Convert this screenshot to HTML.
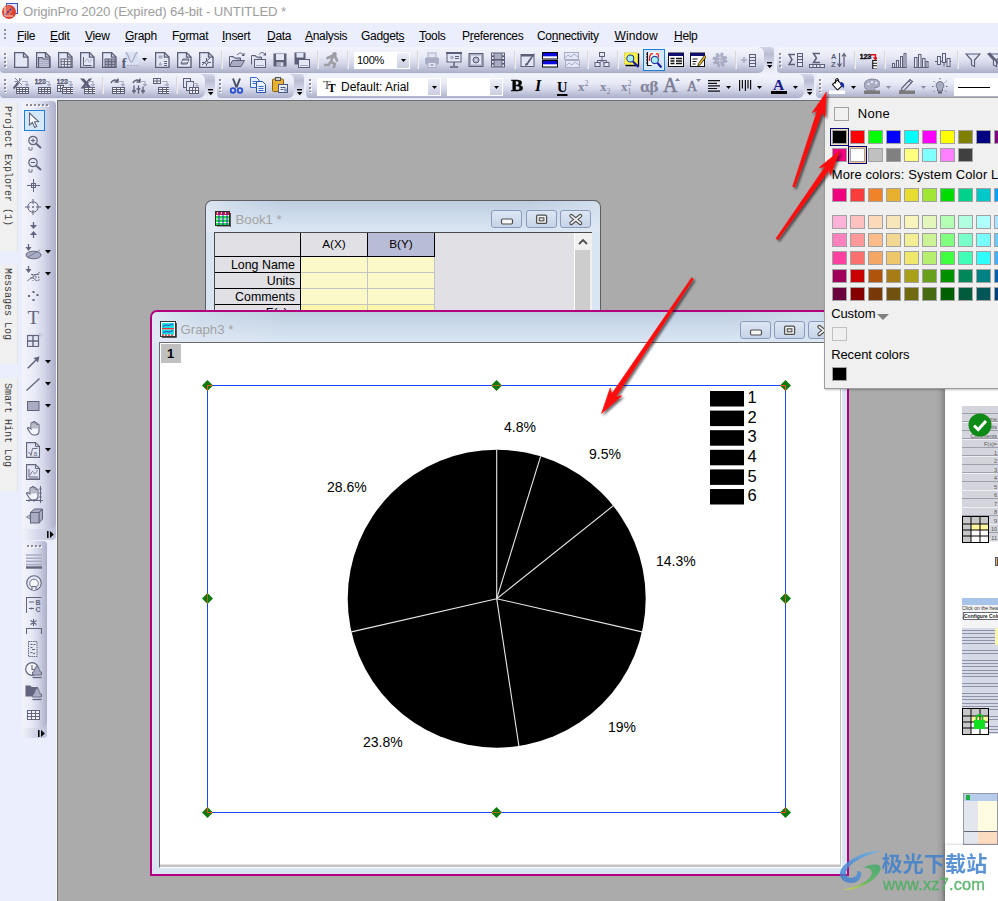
<!DOCTYPE html>
<html><head><meta charset="utf-8"><title>OriginPro 2020</title>
<style>
*{box-sizing:border-box;margin:0;padding:0}
html,body{width:998px;height:901px;overflow:hidden}
body{position:relative;background:#ebeefc;font-family:"Liberation Sans",sans-serif;font-size:12px;color:#000}
.abs{position:absolute}
#title{left:0;top:0;width:998px;height:23px;background:#fff}
#title .t{left:23px;top:3.5px;font-size:13.2px;color:#9d9d9d;white-space:nowrap;letter-spacing:-0.1px}
#menu{left:0;top:23px;width:998px;height:24px;background:#ebeefc}
#menu span{position:absolute;top:5.5px;font-size:12px;white-space:nowrap;color:#000;letter-spacing:-.3px}
#menu u{text-decoration:underline;text-underline-offset:1px}
.tb{background:linear-gradient(#f3f4fb 0%,#e9ebf7 35%,#d3d6e9 65%,#b4b8d0 92%,#a9adc6 100%);border-radius:4px}
.grip{width:2px;background:repeating-linear-gradient(#8d8fa3 0 2px,transparent 2px 4px)}
#mdi{left:57.2px;top:99.7px;width:941px;height:802px;background:#ababab;border-left:1.8px solid #6e6e6e;border-top:1.4px solid #6e6e6e}
.cw{border-radius:7px 7px 0 0;background:linear-gradient(90deg,rgba(226,234,245,.85) 0,rgba(226,234,245,.4) 7%,rgba(226,234,245,0) 20%,rgba(226,234,245,0) 82%,rgba(226,234,245,.55) 100%) 0 0/100% 31px no-repeat,linear-gradient(#bdcee1 0,#dbe6f3 30px,#dae5f2 31px)}
.cwt{position:absolute;font-size:13.2px;color:#a3a3a3;white-space:nowrap}
.wb{position:absolute;width:31px;height:18px;border:1px solid #8c9bbd;border-radius:3px;background:linear-gradient(#dde6f3,#c6d4e8)}
</style></head><body>

<!-- title bar -->
<div id="title" class="abs">
 <svg class="abs" style="left:1px;top:2px" width="18" height="18" viewBox="0 0 18 18">
  <rect x="5.5" y="1.5" width="11" height="10" fill="#dfe6fb" stroke="#3b56c8"/>
  <circle cx="8" cy="10" r="7" fill="#d8412c"/><circle cx="7" cy="8.5" r="4.5" fill="#ee7a62" opacity=".7"/>
  <path d="M4 13 L11 6" stroke="#2233bb" stroke-width="1.3" stroke-dasharray="2 1.2"/>
  <path d="M4 5v9h8" stroke="#fbe0d8" stroke-width="1" fill="none"/>
 </svg>
 <div class="abs t">OriginPro 2020 (Expired) 64-bit - UNTITLED *</div>
</div>

<!-- menu bar -->
<div id="menu" class="abs">
 <div class="abs grip" style="left:4px;top:6px;height:11px"></div>
 <span style="left:17px"><u>F</u>ile</span>
 <span style="left:50px"><u>E</u>dit</span>
 <span style="left:85px"><u>V</u>iew</span>
 <span style="left:125px"><u>G</u>raph</span>
 <span style="left:172px">F<u>o</u>rmat</span>
 <span style="left:222px"><u>I</u>nsert</span>
 <span style="left:267px"><u>D</u>ata</span>
 <span style="left:305px"><u>A</u>nalysis</span>
 <span style="left:361px">Gadget<u>s</u></span>
 <span style="left:419px"><u>T</u>ools</span>
 <span style="left:462px">P<u>r</u>eferences</span>
 <span style="left:537px">Co<u>n</u>nectivity</span>
 <span style="left:614.5px;letter-spacing:.1px"><u>W</u>indow</span>
 <span style="left:674px"><u>H</u>elp</span>
</div>

<!-- TOOLBARS -->
<div id="toolbars">
<div class="abs" style="left:760px;top:47px;width:14px;height:25.5px;background:linear-gradient(#d2d5e7 0,#b9bdd4 28%,#d3d6e8 62%,#f0f1f9 100%);border-radius:0 4px 4px 0;z-index:0"></div>
<div class="abs tb" style="left:0px;top:47px;width:764px;height:25.5px;border-radius:4px 6px 6px 4px"></div>
<svg class="abs" style="left:766.5px;top:61.5px" width="5.5" height="7" viewBox="0 0 5.5 7"><path d="M0 .7h5.500" stroke="#000" stroke-width="1.400"/><path d="M0 3h5.500l-2.750 3.300z" fill="#000"/></svg>
<div class="abs tb" style="left:777px;top:47px;width:225px;height:25.5px;border-radius:4px"></div>
<div class="abs" style="left:5px;top:54px;width:2px;height:14px;background:repeating-linear-gradient(#fdfdff 0 2px,transparent 2px 4px)"></div><div class="abs" style="left:4px;top:53px;width:2px;height:14px;background:repeating-linear-gradient(#8e8c92 0 2px,transparent 2px 4px)"></div>
<svg class="abs" style="left:13.5px;top:52px" width="16" height="16" viewBox="0 0 16 16"><path d="M.6 .6h8.900l4.500 4.500v10.300h-13.400z" fill="#e3e6f4" stroke="#5c5f77" stroke-width="1.350"/><path d="M9.500 .6v4.500h4.500" fill="none" stroke="#5c5f77" stroke-width="1.350"/></svg>
<svg class="abs" style="left:36px;top:52px" width="16" height="16" viewBox="0 0 16 16"><path d="M.6 .6h8.900l4.500 4.500v10.300h-13.400z" fill="#e3e6f4" stroke="#5c5f77" stroke-width="1.350"/><path d="M9.500 .6v4.500h4.500" fill="none" stroke="#5c5f77" stroke-width="1.350"/><path d="M2.500 5.500h4l1 1.500h6v8.500h-11z" fill="#a9adc4" stroke="#5c5f77" stroke-width="1.200"/><path d="M3.500 8.500h9M3.500 10.500h9M3.500 12.500h9M3.500 14.500h9" stroke="#e3e6f4" stroke-dasharray="1 1" opacity=".7"/></svg>
<svg class="abs" style="left:58px;top:52px" width="16" height="16" viewBox="0 0 16 16"><path d="M.6 .6h8.900l4.500 4.500v10.300h-13.400z" fill="#e3e6f4" stroke="#5c5f77" stroke-width="1.350"/><path d="M9.500 .6v4.500h4.500" fill="none" stroke="#5c5f77" stroke-width="1.350"/><rect x="2.5" y="6.5" width="11" height="9" fill="#5c5f77"/><rect x="3.50" y="7.50" width="2.33" height="1.67" fill="#f2f3fa"/><rect x="3.50" y="10.17" width="2.33" height="1.67" fill="#f2f3fa"/><rect x="3.50" y="12.83" width="2.33" height="1.67" fill="#f2f3fa"/><rect x="6.83" y="7.50" width="2.33" height="1.67" fill="#f2f3fa"/><rect x="6.83" y="10.17" width="2.33" height="1.67" fill="#f2f3fa"/><rect x="6.83" y="12.83" width="2.33" height="1.67" fill="#f2f3fa"/><rect x="10.17" y="7.50" width="2.33" height="1.67" fill="#f2f3fa"/><rect x="10.17" y="10.17" width="2.33" height="1.67" fill="#f2f3fa"/><rect x="10.17" y="12.83" width="2.33" height="1.67" fill="#f2f3fa"/></svg>
<svg class="abs" style="left:80px;top:52px" width="16" height="16" viewBox="0 0 16 16"><path d="M.6 .6h8.900l4.500 4.500v10.300h-13.400z" fill="#e3e6f4" stroke="#5c5f77" stroke-width="1.350"/><path d="M9.500 .6v4.500h4.500" fill="none" stroke="#5c5f77" stroke-width="1.350"/><path d="M3.5 5v8.5h8" fill="none" stroke="#5c5f77"/><path d="M5 10c1.5-4 2.5-4 3.5-1s2 1 3-2" fill="none" stroke="#a9adc4"/></svg>
<svg class="abs" style="left:102px;top:52px" width="16" height="16" viewBox="0 0 16 16"><path d="M.6 .6h8.900l4.500 4.500v10.300h-13.400z" fill="#e3e6f4" stroke="#5c5f77" stroke-width="1.350"/><path d="M9.500 .6v4.500h4.500" fill="none" stroke="#5c5f77" stroke-width="1.350"/><rect x="2.5" y="6.5" width="11" height="9" fill="#5c5f77"/><rect x="3.50" y="7.50" width="2.33" height="1.67" fill="#f2f3fa"/><rect x="3.50" y="10.17" width="2.33" height="1.67" fill="#f2f3fa"/><rect x="3.50" y="12.83" width="2.33" height="1.67" fill="#f2f3fa"/><rect x="6.83" y="7.50" width="2.33" height="1.67" fill="#f2f3fa"/><rect x="6.83" y="10.17" width="2.33" height="1.67" fill="#f2f3fa"/><rect x="6.83" y="12.83" width="2.33" height="1.67" fill="#f2f3fa"/><rect x="10.17" y="7.50" width="2.33" height="1.67" fill="#f2f3fa"/><rect x="10.17" y="10.17" width="2.33" height="1.67" fill="#f2f3fa"/><rect x="10.17" y="12.83" width="2.33" height="1.67" fill="#f2f3fa"/><rect x="3" y="7" width="10" height="8" fill="#5c5f77" opacity=".45"/></svg>
<svg class="abs" style="left:122px;top:52px" width="16" height="16" viewBox="0 0 16 16"><rect x="3" y="0" width="13" height="12.500" fill="#dce2f6"/><path d="M3.500 .5c3 0 3.500 9.500 6 9.500s3-9.500 6-9.500" fill="none" stroke="#a9adc4" stroke-width="1.300"/><path d="M5 13.500h11" stroke="#a9adc4" stroke-dasharray="2 1"/><text x="-.5" y="15.500" font-size="15" font-weight="bold" font-family="Liberation Serif,serif" fill="#5c5f77">f</text></svg>
<svg class="abs" style="left:154.5px;top:52px" width="16" height="16" viewBox="0 0 16 16"><path d="M.6 .6h8.900l4.500 4.500v10.300h-13.400z" fill="#e3e6f4" stroke="#5c5f77" stroke-width="1.350"/><path d="M9.500 .6v4.500h4.500" fill="none" stroke="#5c5f77" stroke-width="1.350"/><rect x="3.5" y="3.5" width="4" height="3" fill="#a9adc4"/><path d="M3 13.500l2.500-4 2 4z" fill="#a9adc4"/><path d="M9 9.500h3M9 11.500h3M9 13.500h3" stroke="#5c5f77"/></svg>
<svg class="abs" style="left:176.5px;top:52px" width="16" height="16" viewBox="0 0 16 16"><path d="M.6 .6h8.900l4.500 4.500v10.300h-13.400z" fill="#e3e6f4" stroke="#5c5f77" stroke-width="1.350"/><path d="M9.500 .6v4.500h4.500" fill="none" stroke="#5c5f77" stroke-width="1.350"/><path d="M4 12l2-5h6l-2 5z" fill="#a9adc4" stroke="#5c5f77"/><path d="M5 9.500h6" stroke="#e3e6f4"/></svg>
<svg class="abs" style="left:198.5px;top:52px" width="16" height="16" viewBox="0 0 16 16"><path d="M.6 .6h8.900l4.500 4.500v10.300h-13.400z" fill="#e3e6f4" stroke="#5c5f77" stroke-width="1.350"/><path d="M9.500 .6v4.500h4.500" fill="none" stroke="#5c5f77" stroke-width="1.350"/><path d="M3 13l8-7M7.500 6v8M3 10.500h9" stroke="#5c5f77" fill="none"/><circle cx="7.500" cy="10.500" r="1.500" fill="#e3e6f4" stroke="#5c5f77"/></svg>
<svg class="abs" style="left:142px;top:57.5px" width="5" height="3" viewBox="0 0 5 3"><path d="M0 0h5l-2.500 3z" fill="#000"/></svg>
<div class="abs" style="left:221px;top:51px;width:1px;height:18px;background:#dbd5d3"></div><div class="abs" style="left:222px;top:51px;width:1px;height:18px;background:#eceef8"></div>
<svg class="abs" style="left:229px;top:52px" width="16" height="16" viewBox="0 0 16 16"><path d="M.5 4.500h4l1 1.500h6v3" fill="#a9adc4" stroke="#5c5f77"/><path d="M.5 14.500v-10M.5 14.500l3-6h12l-3.500 6z" fill="#a9adc4" stroke="#5c5f77"/><path d="M8 3c2-2.500 5-2.500 6.500 0" fill="none" stroke="#5c5f77"/><path d="M15.500 .5v3.500h-3z" fill="#5c5f77"/></svg>
<svg class="abs" style="left:251px;top:52px" width="16" height="16" viewBox="0 0 16 16"><path d="M.5 3.500h4l1 1.500h5v3" fill="#a9adc4" stroke="#5c5f77"/><path d="M.5 12.500v-9" stroke="#5c5f77"/><path d="M8 2.500c2-2.500 4.500-2.500 6 0" fill="none" stroke="#5c5f77"/><path d="M15 .2v3.300h-3z" fill="#5c5f77"/><rect x="3.500" y="7.500" width="11" height="8" fill="#e3e6f4" stroke="#5c5f77"/><path d="M5.500 13.500h7" stroke="#5c5f77" stroke-dasharray="1 1"/></svg>
<svg class="abs" style="left:272px;top:52px" width="16" height="16" viewBox="0 0 16 16"><path d="M1.500 1.500h13v13h-13z" fill="#5c5f77"/><rect x="4" y="2" width="8" height="6" fill="#e3e6f4"/><rect x="4.500" y="10" width="7" height="4.500" fill="#a9adc4"/><rect x="9" y="11" width="1.800" height="3" fill="#e3e6f4"/></svg>
<svg class="abs" style="left:294px;top:52px" width="16" height="16" viewBox="0 0 16 16"><path d="M.5 .5h11v12h-11z" fill="#5c5f77"/><rect x="2.500" y="1" width="7" height="4.500" fill="#e3e6f4"/><rect x="4.500" y="7.500" width="11" height="8" fill="#e3e6f4" stroke="#5c5f77"/><path d="M6.500 13.500h7" stroke="#5c5f77" stroke-dasharray="1 1"/></svg>
<div class="abs" style="left:317px;top:51px;width:1px;height:18px;background:#dbd5d3"></div><div class="abs" style="left:318px;top:51px;width:1px;height:18px;background:#eceef8"></div>
<svg class="abs" style="left:324px;top:52px" width="16" height="16" viewBox="0 0 16 16"><circle cx="10.500" cy="2.300" r="2.300" fill="#9f9ea4"/><path d="M3.500 6l4.500-2 3.500 1.200 1.500 3.300M8.500 4.500l-1.500 5.500 4 2-1.500 4M7 9.500l-2.500 3.500h-4" fill="none" stroke="#9f9ea4" stroke-width="2.700" stroke-linejoin="round" stroke-linecap="round"/></svg>
<div class="abs" style="left:347px;top:51px;width:1px;height:18px;background:#dbd5d3"></div><div class="abs" style="left:348px;top:51px;width:1px;height:18px;background:#eceef8"></div>
<div class="abs" style="left:354px;top:52px;width:56px;height:17px;background:#fff"></div><div class="abs" style="left:357px;top:54px;font-size:11px;letter-spacing:-.3px">100%</div><div class="abs" style="left:397px;top:53px;width:12px;height:15px;background:linear-gradient(#eef0f8,#c9cde0)"></div>
<svg class="abs" style="left:401px;top:59.0px" width="5" height="3" viewBox="0 0 5 3"><path d="M0 0h5l-2.500 3z" fill="#000"/></svg>
<div class="abs" style="left:417px;top:51px;width:1px;height:18px;background:#dbd5d3"></div><div class="abs" style="left:418px;top:51px;width:1px;height:18px;background:#eceef8"></div>
<svg class="abs" style="left:424px;top:52px" width="16" height="16" viewBox="0 0 16 16"><rect x="4" y="1" width="8" height="5" fill="#e3e6f4" stroke="#a9adc4"/><rect x="1" y="5.500" width="14" height="7" rx="1.500" fill="#a9adc4"/><rect x="4" y="10.500" width="8" height="5" fill="#e3e6f4" stroke="#a9adc4"/><rect x="6.500" y="12" width="3" height="2" fill="#a9adc4"/></svg>
<svg class="abs" style="left:446px;top:52px" width="16" height="16" viewBox="0 0 16 16"><rect x="1" y="1" width="14" height="9" fill="#e3e6f4" stroke="#5c5f77"/><rect x="0" y="0" width="16" height="2" fill="#5c5f77"/><path d="M8 10v4M4 15h8" stroke="#5c5f77" stroke-width="1.400"/><circle cx="6" cy="5.500" r="1.800" fill="#a9adc4"/><path d="M9 4.500h4M9 6.500h4" stroke="#5c5f77"/></svg>
<svg class="abs" style="left:468px;top:52px" width="16" height="16" viewBox="0 0 16 16"><rect x="1" y="1.500" width="14" height="13" fill="#a9adc4" stroke="#5c5f77"/><rect x="3" y="3.500" width="10" height="9" fill="#e3e6f4"/><circle cx="8" cy="8" r="3" fill="#a9adc4" stroke="#5c5f77"/><circle cx="8" cy="8" r="1" fill="#e3e6f4"/></svg>
<svg class="abs" style="left:490px;top:52px" width="16" height="16" viewBox="0 0 16 16"><rect x="1" y=".5" width="14" height="15" fill="#5c5f77"/><rect x="4.500" y="1.500" width="7" height="5.500" fill="#a9adc4"/><rect x="4.500" y="8.500" width="7" height="6" fill="#a9adc4"/><rect x="2" y="1.5" width="1.600" height="1.800" fill="#f2f3fa"/><rect x="2" y="5.2" width="1.600" height="1.800" fill="#f2f3fa"/><rect x="2" y="9" width="1.600" height="1.800" fill="#f2f3fa"/><rect x="2" y="12.7" width="1.600" height="1.800" fill="#f2f3fa"/><rect x="12.4" y="1.5" width="1.600" height="1.800" fill="#f2f3fa"/><rect x="12.4" y="5.2" width="1.600" height="1.800" fill="#f2f3fa"/><rect x="12.4" y="9" width="1.600" height="1.800" fill="#f2f3fa"/><rect x="12.4" y="12.7" width="1.600" height="1.800" fill="#f2f3fa"/></svg>
<div class="abs" style="left:514px;top:51px;width:1px;height:18px;background:#dbd5d3"></div><div class="abs" style="left:515px;top:51px;width:1px;height:18px;background:#eceef8"></div>
<svg class="abs" style="left:520px;top:52px" width="16" height="16" viewBox="0 0 16 16"><rect x="1" y="2.500" width="13" height="12" fill="#e3e6f4" stroke="#5c5f77"/><rect x="1" y="2.500" width="13" height="2" fill="#5c5f77"/><path d="M15 .5c-3 3-6 7-8 10l1.500 1c2-3 5-7 6.500-11z" fill="#5c5f77"/><path d="M5 13.500c0-2 1.200-3 2.200-2.800l1.200.8c0 1.500-1.400 2.200-3.400 2z" fill="#5c5f77"/></svg>
<svg class="abs" style="left:542px;top:52px" width="16" height="16" viewBox="0 0 16 16"><rect x=".5" y=".5" width="15" height="6.500" fill="#fff" stroke="#000"/><rect x="1" y="1" width="14" height="3.300" fill="#0a0adc"/><rect x=".5" y="8.500" width="15" height="6.500" fill="#fff" stroke="#000"/><rect x="1" y="9" width="14" height="3.300" fill="#0a0adc"/></svg>
<svg class="abs" style="left:564px;top:52px" width="16" height="16" viewBox="0 0 16 16"><rect x=".5" y=".5" width="14" height="7" fill="#e3e6f4" stroke="#a9adc4"/><path d="M1 6l3-3 3 2 3-3 4 3" fill="none" stroke="#a9adc4"/><rect x="1.500" y="8.500" width="14" height="7" fill="#e3e6f4" stroke="#a9adc4"/><path d="M2 14l3-3 3 2 3-3 4 3" fill="none" stroke="#a9adc4"/></svg>
<div class="abs" style="left:587px;top:51px;width:1px;height:18px;background:#dbd5d3"></div><div class="abs" style="left:588px;top:51px;width:1px;height:18px;background:#eceef8"></div>
<svg class="abs" style="left:594px;top:52px" width="16" height="16" viewBox="0 0 16 16"><path d="M8 5v3M3.500 11v-2.500h9v2.500" fill="none" stroke="#5c5f77"/><rect x="5.500" y=".5" width="5" height="4" fill="#e3e6f4" stroke="#5c5f77"/><rect x="1" y="10.500" width="5" height="4" fill="#e3e6f4" stroke="#5c5f77"/><rect x="10" y="10.500" width="5" height="4" fill="#e3e6f4" stroke="#5c5f77"/><path d="M8 8.500l-3 3M8 8.500l3 3" stroke="#5c5f77" stroke-width=".8"/></svg>
<div class="abs" style="left:617px;top:51px;width:1px;height:18px;background:#dbd5d3"></div><div class="abs" style="left:618px;top:51px;width:1px;height:18px;background:#eceef8"></div>
<svg class="abs" style="left:624px;top:52px" width="16" height="16" viewBox="0 0 16 16"><path d="M14.500 1.500v12h-13" fill="none" stroke="#000" stroke-width="1.300"/><rect x=".5" y=".8" width="13" height="11.500" fill="#fbf34a" stroke="#c9b800" stroke-width=".8" stroke-dasharray="1 1"/><circle cx="6.300" cy="6.500" r="3.500" fill="#a8f0f8" stroke="#2a3a9a" stroke-width="1.100"/><path d="M9 9.500l5.500 5.500" stroke="#1a1a9a" stroke-width="2.200"/></svg>
<div class="abs" style="left:642.500px;top:49px;width:22px;height:22px;border:1px solid #1c80d8;background:#d4e8fa"></div>
<svg class="abs" style="left:646px;top:52px" width="16" height="16" viewBox="0 0 16 16"><rect x="2" y="0" width="11" height="13" fill="#fff"/><path d="M1.500 0v13.500h4" fill="none" stroke="#111" stroke-width="1.200"/><path d="M0 2h1.500M0 5h1.500M0 8h1.500M0 11h1.500" stroke="#111"/><path d="M3.500 9c0-7 1.500-8 3.500-7M10 2.500c1.500-2 2.500-1 2.500 3" fill="none" stroke="#f01010" stroke-width="1.200"/><circle cx="8.800" cy="8" r="3.600" fill="#a8f0f8" stroke="#2a3a9a" stroke-width="1.100"/><path d="M11.500 11l4 4.500" stroke="#1a1a9a" stroke-width="2.200"/></svg>
<svg class="abs" style="left:668px;top:52px" width="16" height="16" viewBox="0 0 16 16"><rect x=".5" y="1" width="15" height="13.500" fill="#fff" stroke="#111"/><rect x=".5" y="1" width="15" height="3" fill="#101070"/><path d="M2.500 6.500h4M8 6.500h6M2.500 9h4M8 9h6M2.500 11.500h4M8 11.500h6" stroke="#111" stroke-width="1.300"/></svg>
<svg class="abs" style="left:690px;top:52px" width="16" height="16" viewBox="0 0 16 16"><rect x=".5" y="1" width="14" height="13.500" fill="#fff" stroke="#111"/><rect x=".5" y="1" width="14" height="3" fill="#101070"/><path d="M2.500 7h5M2.500 9.500h4M2.500 12h3" stroke="#111" stroke-width="1.200"/><path d="M14.500 3.500l-6 8-.8 3 2.600-1.800 6-8z" fill="#f0c020" stroke="#111" stroke-width=".8"/></svg>
<svg class="abs" style="left:712px;top:52px" width="16" height="16" viewBox="0 0 16 16"><circle cx="8" cy="8" r="6.200" fill="none" stroke="#a9adc4" stroke-width="2.600" stroke-dasharray="2.600 2.270"/><circle cx="8" cy="8" r="5.300" fill="#a9adc4"/><path d="M8 2.500v11M5.500 5.500h5M5 8.500h6" stroke="#c9cce0" stroke-width="1.100"/><circle cx="8" cy="8" r="5.300" fill="none" stroke="#8f93ab" stroke-width=".6" stroke-dasharray="1 1"/></svg>
<div class="abs" style="left:735px;top:51px;width:1px;height:18px;background:#dbd5d3"></div><div class="abs" style="left:736px;top:51px;width:1px;height:18px;background:#eceef8"></div>
<svg class="abs" style="left:741px;top:52px" width="16" height="16" viewBox="0 0 16 16"><path d="M0 8h6M3 5v6" stroke="#a9adc4" stroke-width="1.600"/><rect x="8.500" y="2.500" width="6" height="12" fill="#e3e6f4" stroke="#5c5f77"/><path d="M9 5.500h5M9 8.500h5M9 11.500h5" stroke="#5c5f77"/></svg>
<div class="abs" style="left:780px;top:54px;width:2px;height:14px;background:repeating-linear-gradient(#fdfdff 0 2px,transparent 2px 4px)"></div><div class="abs" style="left:779px;top:53px;width:2px;height:14px;background:repeating-linear-gradient(#8e8c92 0 2px,transparent 2px 4px)"></div>
<svg class="abs" style="left:788px;top:52px" width="16" height="16" viewBox="0 0 16 16"><path d="M7 2.500h-6l3 5-3 5h6" fill="none" stroke="#5c5f77" stroke-width="1.500"/><rect x="9.500" y="1.500" width="5" height="13" fill="#e3e6f4" stroke="#5c5f77"/><path d="M10 4.500h4M10 7.500h4M10 10.500h4" stroke="#5c5f77"/></svg>
<svg class="abs" style="left:809px;top:52px" width="16" height="16" viewBox="0 0 16 16"><path d="M11 1.500h-6.500l3 4.500-3 4.500h6.500" fill="none" stroke="#5c5f77" stroke-width="1.500"/><rect x=".5" y="12.500" width="15" height="3" fill="#e3e6f4" stroke="#5c5f77"/><path d="M4 13v2M7.500 13v2M11 13v2" stroke="#5c5f77"/></svg>
<svg class="abs" style="left:831px;top:52px" width="16" height="16" viewBox="0 0 16 16"><text x="0" y="7" font-size="7.500" font-weight="bold" font-family="Liberation Sans,sans-serif" fill="#5c5f77">A</text><text x="0" y="15" font-size="7.500" font-weight="bold" font-family="Liberation Sans,sans-serif" fill="#5c5f77">Z</text><path d="M8.500 1v13M6.500 11.500l2 3 2-3" fill="none" stroke="#5c5f77" stroke-width="1.200"/><path d="M13 15v-13M11 4.500l2-3 2 3" fill="none" stroke="#5c5f77" stroke-width="1.200"/></svg>
<div class="abs" style="left:854px;top:51px;width:1px;height:18px;background:#dbd5d3"></div><div class="abs" style="left:855px;top:51px;width:1px;height:18px;background:#eceef8"></div>
<svg class="abs" style="left:860px;top:52px" width="17" height="17" viewBox="0 0 16 16"><text x="-.5" y="6.500" font-size="7" font-weight="bold" font-family="Liberation Sans,sans-serif" fill="#111" stroke="#111" stroke-width=".35" letter-spacing="-.2">123</text><path d="M10 2.500h4.500v3" fill="none" stroke="#e01010" stroke-width="1.400"/><path d="M12 5l2.500 3 2.500-3z" fill="#e01010"/><rect x="12" y="8" width="4.500" height="8" fill="#fff" stroke="#111"/><path d="M12 10.500h4.500M12 13h4.500" stroke="#111"/></svg>
<div class="abs" style="left:884px;top:51px;width:1px;height:18px;background:#dbd5d3"></div><div class="abs" style="left:885px;top:51px;width:1px;height:18px;background:#eceef8"></div>
<svg class="abs" style="left:891px;top:52px" width="16" height="16" viewBox="0 0 16 16"><path d="M.5 15.500h15" stroke="#5c5f77"/><rect x="1.500" y="11.500" width="2" height="4" fill="#e3e6f4" stroke="#5c5f77"/><rect x="5.500" y="8.500" width="2" height="7" fill="#e3e6f4" stroke="#5c5f77"/><rect x="9.500" y="4.500" width="2" height="11" fill="#e3e6f4" stroke="#5c5f77"/><rect x="13" y="1.500" width="2" height="14" fill="#e3e6f4" stroke="#5c5f77"/></svg>
<svg class="abs" style="left:913px;top:52px" width="16" height="16" viewBox="0 0 16 16"><path d="M.5 15.500h15" stroke="#5c5f77"/><rect x="1.500" y="5.500" width="2.500" height="10" fill="#e3e6f4" stroke="#5c5f77"/><rect x="5.500" y="2.500" width="2.500" height="13" fill="#e3e6f4" stroke="#5c5f77"/><rect x="9.500" y="6.500" width="2.500" height="9" fill="#e3e6f4" stroke="#5c5f77"/><rect x="13" y="9.500" width="2" height="6" fill="#e3e6f4" stroke="#5c5f77"/></svg>
<svg class="abs" style="left:935px;top:52px" width="16" height="16" viewBox="0 0 16 16"><path d="M0 9.500h16" stroke="#5c5f77"/><rect x="2.500" y="4.500" width="3" height="8" fill="#e3e6f4" stroke="#5c5f77"/><rect x="7.500" y="1.500" width="3" height="9" fill="#e3e6f4" stroke="#5c5f77"/><rect x="12" y="6.500" width="3" height="8" fill="#e3e6f4" stroke="#5c5f77"/><path d="M9 10.500v4" stroke="#5c5f77"/></svg>
<div class="abs" style="left:957px;top:51px;width:1px;height:18px;background:#dbd5d3"></div><div class="abs" style="left:958px;top:51px;width:1px;height:18px;background:#eceef8"></div>
<svg class="abs" style="left:965px;top:52px" width="16" height="16" viewBox="0 0 16 16"><path d="M1 2h14l-5.500 6v6.500l-3-1.500v-5z" fill="#e3e6f4" stroke="#5c5f77" stroke-width="1.200"/></svg>
<svg class="abs" style="left:987px;top:52px" width="16" height="16" viewBox="0 0 16 16"><path d="M1 2h14l-5.500 6v6.500l-3-1.500v-5z" fill="#e3e6f4" stroke="#5c5f77" stroke-width="1.200"/><path d="M2 1l13 14" stroke="#5c5f77" stroke-width="2"/></svg>
<div class="abs" style="left:201px;top:73.5px;width:14px;height:24.8px;background:linear-gradient(#d2d5e7 0,#b9bdd4 28%,#d3d6e8 62%,#f0f1f9 100%);border-radius:0 4px 4px 0;z-index:0"></div>
<div class="abs tb" style="left:0px;top:73.5px;width:205px;height:24.8px;border-radius:4px 6px 6px 4px"></div>
<svg class="abs" style="left:207.5px;top:88.5px" width="5.5" height="7" viewBox="0 0 5.5 7"><path d="M0 .7h5.500" stroke="#000" stroke-width="1.400"/><path d="M0 3h5.500l-2.750 3.300z" fill="#000"/></svg>
<div class="abs" style="left:290px;top:73.5px;width:14px;height:24.8px;background:linear-gradient(#d2d5e7 0,#b9bdd4 28%,#d3d6e8 62%,#f0f1f9 100%);border-radius:0 4px 4px 0;z-index:0"></div>
<div class="abs tb" style="left:217px;top:73.5px;width:77px;height:24.8px;border-radius:4px 6px 6px 4px"></div>
<svg class="abs" style="left:296.5px;top:88.5px" width="5.5" height="7" viewBox="0 0 5.5 7"><path d="M0 .7h5.500" stroke="#000" stroke-width="1.400"/><path d="M0 3h5.500l-2.750 3.300z" fill="#000"/></svg>
<div class="abs" style="left:800px;top:73.5px;width:14px;height:24.8px;background:linear-gradient(#d2d5e7 0,#b9bdd4 28%,#d3d6e8 62%,#f0f1f9 100%);border-radius:0 4px 4px 0;z-index:0"></div>
<div class="abs tb" style="left:306px;top:73.5px;width:498px;height:24.8px;border-radius:4px 6px 6px 4px"></div>
<svg class="abs" style="left:806.5px;top:88.5px" width="5.5" height="7" viewBox="0 0 5.5 7"><path d="M0 .7h5.500" stroke="#000" stroke-width="1.400"/><path d="M0 3h5.500l-2.750 3.300z" fill="#000"/></svg>
<div class="abs tb" style="left:816px;top:73.5px;width:190px;height:24.8px;border-radius:4px"></div>
<div class="abs" style="left:5px;top:80px;width:2px;height:13px;background:repeating-linear-gradient(#fdfdff 0 2px,transparent 2px 4px)"></div><div class="abs" style="left:4px;top:79px;width:2px;height:13px;background:repeating-linear-gradient(#8e8c92 0 2px,transparent 2px 4px)"></div>
<svg class="abs" style="left:13px;top:77.5px" width="16" height="16" viewBox="0 0 16 16"><path d="M2 0l7 7M6.500 0v3M9 .5l-6 5.500M1.500 3.500h3" stroke="#5c5f77" stroke-width=".8"/><path d="M.5 10.500l5-6" stroke="#5c5f77" stroke-width="2"/><path d="M9 3.500h5v3" fill="none" stroke="#a9adc4" stroke-width="1.200"/><path d="M11.500 6l2.500 3 2.500-3z" fill="#a9adc4"/><rect x="3" y="9" width="13" height="7" fill="#5c5f77"/><rect x="4.00" y="10.00" width="2.00" height="1.00" fill="#f2f3fa"/><rect x="4.00" y="12.00" width="2.00" height="1.00" fill="#f2f3fa"/><rect x="4.00" y="14.00" width="2.00" height="1.00" fill="#f2f3fa"/><rect x="7.00" y="10.00" width="2.00" height="1.00" fill="#f2f3fa"/><rect x="7.00" y="12.00" width="2.00" height="1.00" fill="#f2f3fa"/><rect x="7.00" y="14.00" width="2.00" height="1.00" fill="#f2f3fa"/><rect x="10.00" y="10.00" width="2.00" height="1.00" fill="#f2f3fa"/><rect x="10.00" y="12.00" width="2.00" height="1.00" fill="#f2f3fa"/><rect x="10.00" y="14.00" width="2.00" height="1.00" fill="#f2f3fa"/><rect x="13.00" y="10.00" width="2.00" height="1.00" fill="#f2f3fa"/><rect x="13.00" y="12.00" width="2.00" height="1.00" fill="#f2f3fa"/><rect x="13.00" y="14.00" width="2.00" height="1.00" fill="#f2f3fa"/></svg>
<svg class="abs" style="left:35px;top:77.5px" width="16" height="16" viewBox="0 0 16 16"><text x="-.5" y="6" font-size="7" font-weight="bold" font-family="Liberation Sans,sans-serif" fill="#5c5f77" stroke="#5c5f77" stroke-width=".35" letter-spacing="-.2">123</text><path d="M9 3.500h5v3" fill="none" stroke="#a9adc4" stroke-width="1.200"/><path d="M11.500 6l2.500 3 2.500-3z" fill="#a9adc4"/><rect x="3" y="9" width="13" height="7" fill="#5c5f77"/><rect x="4.00" y="10.00" width="2.00" height="1.00" fill="#f2f3fa"/><rect x="4.00" y="12.00" width="2.00" height="1.00" fill="#f2f3fa"/><rect x="4.00" y="14.00" width="2.00" height="1.00" fill="#f2f3fa"/><rect x="7.00" y="10.00" width="2.00" height="1.00" fill="#f2f3fa"/><rect x="7.00" y="12.00" width="2.00" height="1.00" fill="#f2f3fa"/><rect x="7.00" y="14.00" width="2.00" height="1.00" fill="#f2f3fa"/><rect x="10.00" y="10.00" width="2.00" height="1.00" fill="#f2f3fa"/><rect x="10.00" y="12.00" width="2.00" height="1.00" fill="#f2f3fa"/><rect x="10.00" y="14.00" width="2.00" height="1.00" fill="#f2f3fa"/><rect x="13.00" y="10.00" width="2.00" height="1.00" fill="#f2f3fa"/><rect x="13.00" y="12.00" width="2.00" height="1.00" fill="#f2f3fa"/><rect x="13.00" y="14.00" width="2.00" height="1.00" fill="#f2f3fa"/></svg>
<svg class="abs" style="left:57px;top:77.5px" width="16" height="16" viewBox="0 0 16 16"><text x="-.5" y="6" font-size="7" font-weight="bold" font-family="Liberation Sans,sans-serif" fill="#5c5f77" stroke="#5c5f77" stroke-width=".35" letter-spacing="-.2">123</text><path d="M9 3.500h5v3" fill="none" stroke="#a9adc4" stroke-width="1.200"/><path d="M11.500 6l2.500 3 2.500-3z" fill="#a9adc4"/><rect x="0" y="7" width="7" height="7" fill="#5c5f77"/><rect x="1.00" y="8.00" width="2.00" height="2.00" fill="#f2f3fa"/><rect x="1.00" y="11.00" width="2.00" height="2.00" fill="#f2f3fa"/><rect x="4.00" y="8.00" width="2.00" height="2.00" fill="#f2f3fa"/><rect x="4.00" y="11.00" width="2.00" height="2.00" fill="#f2f3fa"/><rect x="5" y="9" width="13" height="7" fill="#5c5f77"/><rect x="6.00" y="10.00" width="3.00" height="1.00" fill="#f2f3fa"/><rect x="6.00" y="12.00" width="3.00" height="1.00" fill="#f2f3fa"/><rect x="6.00" y="14.00" width="3.00" height="1.00" fill="#f2f3fa"/><rect x="10.00" y="10.00" width="3.00" height="1.00" fill="#f2f3fa"/><rect x="10.00" y="12.00" width="3.00" height="1.00" fill="#f2f3fa"/><rect x="10.00" y="14.00" width="3.00" height="1.00" fill="#f2f3fa"/><rect x="14.00" y="10.00" width="3.00" height="1.00" fill="#f2f3fa"/><rect x="14.00" y="12.00" width="3.00" height="1.00" fill="#f2f3fa"/><rect x="14.00" y="14.00" width="3.00" height="1.00" fill="#f2f3fa"/></svg>
<svg class="abs" style="left:79px;top:77.5px" width="16" height="16" viewBox="0 0 16 16"><path d="M1 .5h4l2.500 3 2.500-3h3l-4 5 4 5h-4l-2-2.500-2 2.500h-3.500l4-5z" fill="#5c5f77"/><path d="M9 3.500h5v3" fill="none" stroke="#a9adc4" stroke-width="1.200"/><path d="M11.500 6l2.500 3 2.500-3z" fill="#a9adc4"/><rect x="5" y="9" width="13" height="7" fill="#5c5f77"/><rect x="6.00" y="10.00" width="3.00" height="1.00" fill="#f2f3fa"/><rect x="6.00" y="12.00" width="3.00" height="1.00" fill="#f2f3fa"/><rect x="6.00" y="14.00" width="3.00" height="1.00" fill="#f2f3fa"/><rect x="10.00" y="10.00" width="3.00" height="1.00" fill="#f2f3fa"/><rect x="10.00" y="12.00" width="3.00" height="1.00" fill="#f2f3fa"/><rect x="10.00" y="14.00" width="3.00" height="1.00" fill="#f2f3fa"/><rect x="14.00" y="10.00" width="3.00" height="1.00" fill="#f2f3fa"/><rect x="14.00" y="12.00" width="3.00" height="1.00" fill="#f2f3fa"/><rect x="14.00" y="14.00" width="3.00" height="1.00" fill="#f2f3fa"/></svg>
<div class="abs" style="left:102px;top:77px;width:1px;height:17px;background:#dbd5d3"></div><div class="abs" style="left:103px;top:77px;width:1px;height:17px;background:#eceef8"></div>
<svg class="abs" style="left:109px;top:77.5px" width="16" height="16" viewBox="0 0 16 16"><path d="M2 5c1-3 5-4 7-1.500M9 .5v3.500h-3.500" fill="none" stroke="#5c5f77" stroke-width="1.500"/><path d="M9 3.500h5v3" fill="none" stroke="#a9adc4" stroke-width="1.200"/><path d="M11.500 6l2.500 3 2.500-3z" fill="#a9adc4"/><rect x="3" y="9" width="13" height="7" fill="#5c5f77"/><rect x="4.00" y="10.00" width="3.00" height="1.00" fill="#f2f3fa"/><rect x="4.00" y="12.00" width="3.00" height="1.00" fill="#f2f3fa"/><rect x="4.00" y="14.00" width="3.00" height="1.00" fill="#f2f3fa"/><rect x="8.00" y="10.00" width="3.00" height="1.00" fill="#f2f3fa"/><rect x="8.00" y="12.00" width="3.00" height="1.00" fill="#f2f3fa"/><rect x="8.00" y="14.00" width="3.00" height="1.00" fill="#f2f3fa"/><rect x="12.00" y="10.00" width="3.00" height="1.00" fill="#f2f3fa"/><rect x="12.00" y="12.00" width="3.00" height="1.00" fill="#f2f3fa"/><rect x="12.00" y="14.00" width="3.00" height="1.00" fill="#f2f3fa"/></svg>
<svg class="abs" style="left:131px;top:77.5px" width="16" height="16" viewBox="0 0 16 16"><path d="M2 5c1-3 5-4 7-1.500M9 .5v3.500h-3.500" fill="none" stroke="#5c5f77" stroke-width="1.500"/><path d="M9 3.500h5v3" fill="none" stroke="#a9adc4" stroke-width="1.200"/><path d="M11.500 6l2.500 3 2.500-3z" fill="#a9adc4"/><path d="M3 7.500v8M7.500 7.500v8M12 8.500v7M1 13h4M5.500 11h4M10 13h4" stroke="#5c5f77" stroke-width="1.300"/></svg>
<svg class="abs" style="left:153px;top:77.5px" width="16" height="16" viewBox="0 0 16 16"><rect x="0" y="0" width="8" height="6" fill="#5c5f77"/><rect x="1.00" y="1.00" width="2.50" height="1.50" fill="#f2f3fa"/><rect x="1.00" y="3.50" width="2.50" height="1.50" fill="#f2f3fa"/><rect x="4.50" y="1.00" width="2.50" height="1.50" fill="#f2f3fa"/><rect x="4.50" y="3.50" width="2.50" height="1.50" fill="#f2f3fa"/><path d="M9 3.500h5v3" fill="none" stroke="#a9adc4" stroke-width="1.200"/><path d="M11.500 6l2.500 3 2.500-3z" fill="#a9adc4"/><rect x="5" y="9" width="13" height="7" fill="#5c5f77"/><rect x="6.00" y="10.00" width="3.00" height="1.00" fill="#f2f3fa"/><rect x="6.00" y="12.00" width="3.00" height="1.00" fill="#f2f3fa"/><rect x="6.00" y="14.00" width="3.00" height="1.00" fill="#f2f3fa"/><rect x="10.00" y="10.00" width="3.00" height="1.00" fill="#f2f3fa"/><rect x="10.00" y="12.00" width="3.00" height="1.00" fill="#f2f3fa"/><rect x="10.00" y="14.00" width="3.00" height="1.00" fill="#f2f3fa"/><rect x="14.00" y="10.00" width="3.00" height="1.00" fill="#f2f3fa"/><rect x="14.00" y="12.00" width="3.00" height="1.00" fill="#f2f3fa"/><rect x="14.00" y="14.00" width="3.00" height="1.00" fill="#f2f3fa"/></svg>
<div class="abs" style="left:176px;top:77px;width:1px;height:17px;background:#dbd5d3"></div><div class="abs" style="left:177px;top:77px;width:1px;height:17px;background:#eceef8"></div>
<svg class="abs" style="left:183px;top:77.5px" width="16" height="16" viewBox="0 0 16 16"><rect x=".5" y=".5" width="7" height="9" fill="#e3e6f4" stroke="#5c5f77"/><rect x="3.500" y="3.500" width="7" height="9" fill="#e3e6f4" stroke="#5c5f77"/><path d="M10 5.500h4v2" fill="none" stroke="#a9adc4" stroke-width="1.200"/><path d="M12 7l2 2.500 2-2.500z" fill="#a9adc4"/><rect x="6" y="9" width="10" height="7" fill="#5c5f77"/><rect x="7.00" y="10.00" width="2.00" height="2.00" fill="#f2f3fa"/><rect x="7.00" y="13.00" width="2.00" height="2.00" fill="#f2f3fa"/><rect x="10.00" y="10.00" width="2.00" height="2.00" fill="#f2f3fa"/><rect x="10.00" y="13.00" width="2.00" height="2.00" fill="#f2f3fa"/><rect x="13.00" y="10.00" width="2.00" height="2.00" fill="#f2f3fa"/><rect x="13.00" y="13.00" width="2.00" height="2.00" fill="#f2f3fa"/></svg>
<div class="abs" style="left:220px;top:80px;width:2px;height:13px;background:repeating-linear-gradient(#fdfdff 0 2px,transparent 2px 4px)"></div><div class="abs" style="left:219px;top:79px;width:2px;height:13px;background:repeating-linear-gradient(#8e8c92 0 2px,transparent 2px 4px)"></div>
<svg class="abs" style="left:228px;top:77.5px" width="16" height="16" viewBox="0 0 16 16"><path d="M5 .5l3.500 9M12 .5l-3.500 9" stroke="#4a4e66" stroke-width="2"/><circle cx="5" cy="12.500" r="2.300" fill="none" stroke="#2a50d0" stroke-width="1.800"/><circle cx="12" cy="12.500" r="2.300" fill="none" stroke="#2a50d0" stroke-width="1.800"/></svg>
<svg class="abs" style="left:250px;top:76.5px" width="16" height="16" viewBox="0 0 16 16"><path d="M.5 .5h6l2.500 2.500v7.500h-8.500z" fill="#eaf2ff" stroke="#3a6ad0"/><path d="M2.500 4.500h4M2.500 6.500h4" stroke="#3a6ad0"/><path d="M6.500 4.500h6l3 3v8h-9z" fill="#eaf2ff" stroke="#2a50b0"/><path d="M8.500 9.500h5M8.500 11.500h5M8.500 13.500h5" stroke="#3a6ad0"/></svg>
<svg class="abs" style="left:272px;top:76.5px" width="16" height="16" viewBox="0 0 16 16"><rect x=".5" y="2" width="11" height="12.500" rx="1" fill="#e8b030" stroke="#8a6410"/><rect x="3.500" y=".5" width="5" height="3" fill="#d0d0d0" stroke="#555"/><rect x="6.500" y="7.500" width="9" height="8" fill="#e8eef8" stroke="#4a5a80"/><path d="M8.500 10.500h5M8.500 12.500h3" stroke="#4a5a80"/><rect x="12" y="11.500" width="3" height="3" fill="#8a9ac0"/></svg>
<div class="abs" style="left:310px;top:80px;width:2px;height:13px;background:repeating-linear-gradient(#fdfdff 0 2px,transparent 2px 4px)"></div><div class="abs" style="left:309px;top:79px;width:2px;height:13px;background:repeating-linear-gradient(#8e8c92 0 2px,transparent 2px 4px)"></div>
<div class="abs" style="left:317px;top:77.500px;width:124px;height:18px;background:#fff"></div>
<div class="abs" style="left:323px;top:78px;font-family:'Liberation Serif',serif;font-size:13px;line-height:14px;color:#555">T</div><div class="abs" style="left:328px;top:82px;font-family:'Liberation Serif',serif;font-weight:bold;font-size:11.500px;line-height:12px;color:#000">T</div>
<div class="abs" style="left:341px;top:79.500px;font-size:12px;white-space:nowrap;letter-spacing:0">Default: Arial</div>
<div class="abs" style="left:428px;top:78.500px;width:12px;height:16px;background:linear-gradient(#eef0f8,#c9cde0)"></div>
<svg class="abs" style="left:432px;top:85.5px" width="5" height="3" viewBox="0 0 5 3"><path d="M0 0h5l-2.500 3z" fill="#000"/></svg>
<div class="abs" style="left:447px;top:77.500px;width:56px;height:18px;background:#fff"></div>
<div class="abs" style="left:490px;top:78.500px;width:12px;height:16px;background:linear-gradient(#eef0f8,#c9cde0)"></div>
<svg class="abs" style="left:493.5px;top:85.5px" width="5" height="3" viewBox="0 0 5 3"><path d="M0 0h5l-2.500 3z" fill="#000"/></svg>
<div class="abs" style="left:511px;top:76px;font-family:'Liberation Serif',serif;font-weight:bold;font-size:16.500px;line-height:20px;-webkit-text-stroke:.5px #000;transform:scaleX(1.1);transform-origin:0 0">B</div>
<div class="abs" style="left:535px;top:76px;font-family:'Liberation Serif',serif;font-weight:bold;font-style:italic;font-size:16px;line-height:20px">I</div>
<div class="abs" style="left:557px;top:76.500px;font-family:'Liberation Serif',serif;font-size:14.500px;font-weight:bold;line-height:20px;text-decoration:underline;text-decoration-thickness:1.500px;text-underline-offset:2px">U</div>
<div class="abs" style="left:578px;top:77px;font-size:13px;font-family:'Liberation Serif',serif;font-weight:bold;font-style:normal;color:#83869d;line-height:20px">x<span style="font-size:8px;position:relative;top:-5px;font-weight:normal">2</span></div>
<div class="abs" style="left:600px;top:77px;font-size:13px;font-family:'Liberation Serif',serif;font-weight:bold;font-style:normal;color:#83869d;line-height:20px">x<span style="font-size:8px;position:relative;top:3px;font-weight:normal">2</span></div>
<div class="abs" style="left:621px;top:77px;font-size:13px;font-family:'Liberation Serif',serif;font-weight:bold;font-style:normal;color:#83869d;line-height:20px">x<span style="font-size:8px;position:relative;top:-5px;font-weight:normal">2</span><span style="font-size:8px;position:relative;top:3px;left:-4px;font-weight:normal">1</span></div>
<div class="abs" style="left:640px;top:76.500px;font-size:14px;font-family:'DejaVu Serif','Liberation Serif',serif;font-weight:bold;color:#83869d;line-height:20px;letter-spacing:-1.200px">αβ</div>
<div class="abs" style="left:663px;top:73px;font-size:20px;font-family:'Liberation Serif',serif;color:#787b92;-webkit-text-stroke:.5px #787b92;line-height:24px">A</div>
<svg class="abs" style="left:675px;top:78px" width="5" height="3" viewBox="0 0 5 3"><path d="M0 3h5l-2.500-3z" fill="#7f8298"/></svg>
<div class="abs" style="left:687px;top:77px;font-size:14px;font-family:'Liberation Serif',serif;color:#787b92;-webkit-text-stroke:.4px #787b92;line-height:20px">A</div>
<svg class="abs" style="left:696px;top:79px" width="5" height="3" viewBox="0 0 5 3"><path d="M0 0h5l-2.500 3z" fill="#7f8298"/></svg>
<svg class="abs" style="left:708px;top:79.5px" width="12" height="12" viewBox="0 0 12 12"><path d="M0 .7h12M0 3.300h9M0 5.900h12M0 8.500h9M0 11.100h12" stroke="#111" stroke-width="1.200"/></svg>
<svg class="abs" style="left:726px;top:85.5px" width="5" height="3" viewBox="0 0 5 3"><path d="M0 0h5l-2.500 3z" fill="#000"/></svg>
<svg class="abs" style="left:738.5px;top:80px" width="13" height="11" viewBox="0 0 13 11"><path d="M.6 0v11M3.400 0v8.500M6.400 0v11M9 0v8.500M11.600 0v9.500" stroke="#111" stroke-width="1.200"/></svg>
<svg class="abs" style="left:757px;top:85.5px" width="5" height="3" viewBox="0 0 5 3"><path d="M0 0h5l-2.500 3z" fill="#000"/></svg>
<div class="abs" style="left:773px;top:74.500px;font-size:15.500px;font-weight:bold;font-family:'Liberation Serif',serif;color:#1a1a8c;line-height:20px">A</div><div class="abs" style="left:771px;top:90.500px;width:16px;height:3.500px;background:#000"></div>
<svg class="abs" style="left:793px;top:85.5px" width="5" height="3" viewBox="0 0 5 3"><path d="M0 0h5l-2.500 3z" fill="#000"/></svg>
<div class="abs" style="left:820px;top:80px;width:2px;height:13px;background:repeating-linear-gradient(#fdfdff 0 2px,transparent 2px 4px)"></div><div class="abs" style="left:819px;top:79px;width:2px;height:13px;background:repeating-linear-gradient(#8e8c92 0 2px,transparent 2px 4px)"></div>
<svg class="abs" style="left:829px;top:77.5px" width="16" height="16" viewBox="0 0 16 16"><path d="M3.500 6.500l5-4.500 5 5.500-5 4.500z" fill="#fff" stroke="#111" stroke-width="1.100"/><path d="M6.500 5.500v-3.500a1.500 1.500 0 0 1 3 0v2" fill="none" stroke="#111"/><path d="M12 4c3 .5 4 3 2.500 6.500-1-2-2-3-3.500-3.500z" fill="#1a2ab0"/><rect x="0" y="12.500" width="16" height="3.500" fill="#fff"/></svg>
<svg class="abs" style="left:851px;top:85.5px" width="5" height="3" viewBox="0 0 5 3"><path d="M0 0h5l-2.500 3z" fill="#000"/></svg>
<svg class="abs" style="left:864px;top:77.5px" width="16" height="16" viewBox="0 0 16 16"><path d="M8.500 1c4.500 0 7.500 2 7.500 5s-2.500 3.500-4.500 3.500c-1.500 0-1.500 1.500-.5 2s-1 1.500-3 1.500c-4.500 0-8-2.500-8-6s3.500-6 8.500-6z" fill="#a9adc4" stroke="#5c5f77" stroke-width=".8" stroke-dasharray="1.600 .7"/><circle cx="4.500" cy="6" r="1.200" fill="#e3e6f4"/><circle cx="8" cy="4" r="1.200" fill="#e3e6f4"/><circle cx="12" cy="5" r="1.200" fill="#e3e6f4"/><rect x="0" y="12.500" width="16" height="3.500" fill="#7b7b7b"/></svg>
<svg class="abs" style="left:886px;top:85.5px" width="5" height="3" viewBox="0 0 5 3"><path d="M0 0h5l-2.500 3z" fill="#8a8da3"/></svg>
<svg class="abs" style="left:899px;top:77.5px" width="16" height="16" viewBox="0 0 16 16"><path d="M3 10l8-8.500 2.500 2-8 8.500-3.500 1z" fill="#e3e6f4" stroke="#5c5f77" stroke-width="1.100"/><path d="M10 3l2 2" stroke="#5c5f77"/><rect x="0" y="12.500" width="16" height="3.500" fill="#7b7b7b"/></svg>
<svg class="abs" style="left:921px;top:85.5px" width="5" height="3" viewBox="0 0 5 3"><path d="M0 0h5l-2.500 3z" fill="#8a8da3"/></svg>
<svg class="abs" style="left:932px;top:77.5px" width="16" height="16" viewBox="0 0 16 16"><path d="M8 3.500a4 4 0 0 1 2.500 7v2.500h-5v-2.500a4 4 0 0 1 2.500-7z" fill="#a9adc4" stroke="#5c5f77" stroke-width=".8"/><rect x="6" y="13.500" width="4" height="2" fill="#5c5f77"/><path d="M8 0v2M1.500 3l1.500 1.500M14.500 3l-1.500 1.500M0 8.500h2M14 8.500h2M1.500 14l1.500-1.500M14.500 14l-1.500-1.500" stroke="#5c5f77" stroke-dasharray="1 .6"/></svg>
<div class="abs" style="left:953.500px;top:77.500px;width:50px;height:18px;background:#fff"></div><div class="abs" style="left:958px;top:86.500px;width:32px;height:1px;background:#000"></div>
<div class="abs" style="left:0;top:98.300px;width:998px;height:1.200px;background:#e4e6f3"></div>
</div>

<!-- SIDEBAR -->
<div id="sidebar">
<div class="abs" style="left:0;top:103px;width:18px;height:148px;background:#f0f0f0;border-right:1px solid #e2e2e8"></div>
<div class="abs" style="left:13px;top:106px;transform-origin:0 0;transform:rotate(90deg);font-family:'Liberation Mono',monospace;font-size:10px;white-space:nowrap;color:#3c3c3c;line-height:12px">Project Explorer (1)</div>
<div class="abs" style="left:0;top:265px;width:18px;height:99px;background:#f0f0f0;border-right:1px solid #e2e2e8"></div>
<div class="abs" style="left:13px;top:268px;transform-origin:0 0;transform:rotate(90deg);font-family:'Liberation Mono',monospace;font-size:10px;white-space:nowrap;color:#3c3c3c;line-height:12px">Messages Log</div>
<div class="abs" style="left:0;top:378px;width:18px;height:113px;background:#f0f0f0;border-right:1px solid #e2e2e8"></div>
<div class="abs" style="left:13px;top:383px;transform-origin:0 0;transform:rotate(90deg);font-family:'Liberation Mono',monospace;font-size:10px;white-space:nowrap;color:#3c3c3c;line-height:12px">Smart Hint Log</div>
<div class="abs" style="left:22px;top:522px;width:34px;height:18px;background:linear-gradient(90deg,#f1f2fa,#d6d9ea 45%,#bec2d9);border-radius:0 0 4px 4px"></div>
<div class="abs" style="left:22px;top:100.500px;width:34px;height:428px;background:linear-gradient(90deg,#f3f4fb 0%,#e9ebf7 35%,#d3d6e9 65%,#b4b8d0 92%,#a9adc6 100%);border-radius:4px 4px 6px 6px"></div>
<svg class="abs" style="left:47px;top:531px" width="7" height="8" viewBox="0 0 7 8"><path d="M.8 0v7" stroke="#000" stroke-width="1.500"/><path d="M3 0v7l3.800-3.500z" fill="#000"/></svg>
<div class="abs" style="left:27px;top:105px;width:23px;height:2px;background:repeating-linear-gradient(90deg,#fdfdff 0 2px,transparent 2px 4px)"></div><div class="abs" style="left:26px;top:104px;width:23px;height:2px;background:repeating-linear-gradient(90deg,#8e8c92 0 2px,transparent 2px 4px)"></div>
<div class="abs" style="left:23.500px;top:109.500px;width:21.500px;height:21.500px;border:1px solid #1c80d8;background:#d4e8fa"></div>
<svg class="abs" style="left:28px;top:112px" width="12" height="17" viewBox="0 0 12 17"><path d="M1.500 1v12l3-2.500 2.200 5 2-1-2.200-4.800 4-.2z" fill="#fff" stroke="#62657d" stroke-width="1.100"/></svg>
<svg class="abs" style="left:27px;top:135px" width="16" height="16" viewBox="0 0 16 16"><circle cx="6" cy="5.500" r="4.200" fill="#e3e6f4" stroke="#62657d" stroke-width="1.200"/><path d="M3.800 5.500h4.400M6 3.300v4.400" stroke="#62657d"/><path d="M9 8.500l5 4.500" stroke="#62657d" stroke-width="2"/><path d="M2 12v3h3M5 12v3" stroke="#62657d" fill="none" stroke-width=".9"/></svg>
<svg class="abs" style="left:27px;top:157px" width="16" height="16" viewBox="0 0 16 16"><circle cx="6" cy="5.500" r="4.200" fill="#e3e6f4" stroke="#62657d" stroke-width="1.200"/><path d="M3.800 5.500h4.400" stroke="#62657d"/><path d="M9 8.500l5 4.500" stroke="#62657d" stroke-width="2"/><path d="M2 12v3h3M5 12v3" stroke="#62657d" fill="none" stroke-width=".9"/></svg>
<svg class="abs" style="left:27px;top:179px" width="13" height="13" viewBox="0 0 13 13"><path d="M6.500 0v13M0 6.500h13" stroke="#62657d"/><rect x="4.500" y="4.500" width="4" height="4" fill="none" stroke="#62657d"/></svg>
<svg class="abs" style="left:25px;top:199px" width="16" height="16" viewBox="0 0 16 16"><circle cx="8" cy="8" r="5.200" fill="none" stroke="#62657d"/><path d="M8 0v5M8 11v5M0 8h5M11 8h5" stroke="#62657d"/><circle cx="8" cy="8" r="1" fill="#62657d"/></svg>
<svg class="abs" style="left:45px;top:206px" width="6" height="4" viewBox="0 0 6 4"><path d="M0 0h6l-3 3.500z" fill="#000"/></svg>
<svg class="abs" style="left:28px;top:222px" width="11" height="16" viewBox="0 0 11 16"><path d="M5.500 0v5M5.500 16v-5" stroke="#62657d" stroke-width="1.300"/><path d="M2 3l3.500 4 3.500-4zM2 13l3.500-4 3.500 4z" fill="#62657d"/></svg>
<svg class="abs" style="left:25px;top:244px" width="17" height="16" viewBox="0 0 17 16"><path d="M3.500 0v4" stroke="#62657d" stroke-width="1.300"/><path d="M.5 3l3 4 3-4z" fill="#62657d"/><ellipse cx="8.500" cy="11" rx="7.500" ry="3.800" fill="#a9adc4" stroke="#62657d"/><path d="M3 13l12-7" stroke="#62657d" stroke-width=".7"/></svg>
<svg class="abs" style="left:45px;top:250px" width="6" height="4" viewBox="0 0 6 4"><path d="M0 0h6l-3 3.500z" fill="#000"/></svg>
<svg class="abs" style="left:25px;top:266px" width="17" height="16" viewBox="0 0 17 16"><path d="M3.500 0v4" stroke="#62657d" stroke-width="1.300"/><path d="M.5 3l3 4 3-4z" fill="#62657d"/><path d="M2 15l13-9" stroke="#62657d" stroke-width=".8"/><path d="M6 8.500h8M8 8v7M5 12h4M10 11h4v3.500h-4z" stroke="#62657d" stroke-width=".9" fill="none" stroke-dasharray="2 1"/></svg>
<svg class="abs" style="left:45px;top:272px" width="6" height="4" viewBox="0 0 6 4"><path d="M0 0h6l-3 3.500z" fill="#000"/></svg>
<svg class="abs" style="left:28px;top:291px" width="11" height="11" viewBox="0 0 11 11"><rect x="4.500" y="0" width="2" height="2" fill="#62657d"/><rect x="0" y="4" width="2" height="2" fill="#62657d"/><rect x="8.500" y="3" width="2" height="2" fill="#62657d"/><rect x="4.500" y="8" width="2" height="2" fill="#62657d"/></svg>
<div class="abs" style="left:27.500px;top:308px;font-family:'Liberation Serif',serif;font-size:19px;line-height:20px;color:#62657d">T</div>
<svg class="abs" style="left:27px;top:333px" width="16" height="14" viewBox="0 0 16 14"><rect x=".5" y="2.500" width="11" height="11" fill="#e3e6f4" stroke="#62657d" stroke-width="1.200"/><path d="M6 2.500v11M.5 8h11" stroke="#62657d" stroke-width="1.400"/><circle cx="13.500" cy="1.800" r="1.300" fill="none" stroke="#a9adc4" stroke-width=".7"/></svg>
<svg class="abs" style="left:27px;top:356px" width="13" height="13" viewBox="0 0 13 13"><path d="M.8 12.200l10-10" stroke="#62657d" stroke-width="1.500"/><path d="M12.500 .5l-6 1.500 4.500 4.500z" fill="#62657d"/></svg>
<svg class="abs" style="left:45px;top:360px" width="6" height="4" viewBox="0 0 6 4"><path d="M0 0h6l-3 3.500z" fill="#000"/></svg>
<svg class="abs" style="left:26px;top:378px" width="14" height="13" viewBox="0 0 14 13"><path d="M.5 12.500l13-12" stroke="#62657d" stroke-width="1.300"/></svg>
<svg class="abs" style="left:45px;top:382px" width="6" height="4" viewBox="0 0 6 4"><path d="M0 0h6l-3 3.500z" fill="#000"/></svg>
<svg class="abs" style="left:27px;top:401px" width="13" height="10" viewBox="0 0 13 10"><rect x=".5" y=".5" width="11.500" height="9" fill="#a9adc4" stroke="#62657d"/></svg>
<svg class="abs" style="left:45px;top:404px" width="6" height="4" viewBox="0 0 6 4"><path d="M0 0h6l-3 3.500z" fill="#000"/></svg>
<svg class="abs" style="left:27px;top:421px" width="14" height="15" viewBox="0 0 14 15"><path d="M4 8v-5.500a1 1 0 0 1 2 0v-1a1 1 0 0 1 2 0v1a1 1 0 0 1 2 0v1.500a1 1 0 0 1 2 0v6c0 2.500-1.500 4-4 4h-1.500c-1.500 0-2.500-1-3.500-2.500l-2.500-4c0-1 1.300-1.200 2-.5z" fill="#f4f5fb" stroke="#62657d" stroke-width="1.100"/><path d="M6 2.500v5M8 1.500v6M10 3v4.500" stroke="#62657d" stroke-width=".8"/></svg>
<svg class="abs" style="left:26px;top:442px" width="15" height="16" viewBox="0 0 15 16"><path d="M.6 .6h8.900l4 4v10.800h-12.900z" fill="#e3e6f4" stroke="#62657d" stroke-width="1.100"/><path d="M9.500 .6v4h4" fill="none" stroke="#62657d"/><path d="M2.500 10.500l1 .0 1.500 3 1.500-7h5" fill="none" stroke="#62657d" stroke-width=".9"/><text x="7.500" y="13.500" font-size="6.500" font-family="Liberation Sans,sans-serif" fill="#62657d">a</text></svg>
<svg class="abs" style="left:45px;top:448px" width="6" height="4" viewBox="0 0 6 4"><path d="M0 0h6l-3 3.500z" fill="#000"/></svg>
<svg class="abs" style="left:26px;top:464px" width="15" height="16" viewBox="0 0 15 16"><path d="M.6 .6h8.900l4 4v10.800h-12.900z" fill="#e3e6f4" stroke="#62657d" stroke-width="1.100"/><path d="M9.500 .6v4h4" fill="none" stroke="#62657d"/><path d="M3 5v8h9" fill="none" stroke="#62657d"/><path d="M4.500 11c1.500-5 2.500-4 3.500-2s2 0 3.500-3" fill="none" stroke="#62657d" stroke-width=".8"/><path d="M3.500 14.500h9" stroke="#62657d" stroke-dasharray="1 1"/></svg>
<svg class="abs" style="left:45px;top:470px" width="6" height="4" viewBox="0 0 6 4"><path d="M0 0h6l-3 3.500z" fill="#000"/></svg>
<svg class="abs" style="left:26px;top:486px" width="17" height="17" viewBox="0 0 17 17"><path d="M4 8v-5.500a1 1 0 0 1 2 0v-1a1 1 0 0 1 2 0v1a1 1 0 0 1 2 0v1.500a1 1 0 0 1 2 0v6c0 2.500-1.500 4-4 4h-1.500c-1.500 0-2.500-1-3.500-2.500l-2.500-4c0-1 1.300-1.200 2-.5z" fill="#f4f5fb" stroke="#62657d" stroke-width="1.100"/><path d="M6 2.500v5M8 1.500v6M10 3v4.500" stroke="#62657d" stroke-width=".8"/><path d="M14.500 0v17M0 14.500h17" stroke="#62657d"/><path d="M13 3h3M13 7h3M13 11h3M3 13v3M8 13v3" stroke="#62657d" stroke-width=".8"/></svg>
<svg class="abs" style="left:26px;top:508px" width="17" height="16" viewBox="0 0 17 16"><path d="M4.500 4.500l4-3.500h8l-3.500 3.500zM13 4.500l3.500-3.500v10l-3.500 4z" fill="#a9adc4" stroke="#62657d"/><rect x="4.500" y="4.500" width="8.500" height="10.500" fill="#a9adc4" stroke="#62657d"/><path d="M.5 9l3.500-2v4z" fill="#e3e6f4" stroke="#62657d" stroke-width=".8"/></svg>
<div class="abs" style="left:21.500px;top:720px;width:25.500px;height:18px;background:linear-gradient(90deg,#f1f2fa,#d6d9ea 45%,#bec2d9);border-radius:0 0 4px 4px"></div>
<div class="abs" style="left:21.500px;top:540.500px;width:25.500px;height:187px;background:linear-gradient(90deg,#f3f4fb 0%,#e9ebf7 35%,#d3d6e9 65%,#b4b8d0 92%,#a9adc6 100%);border-radius:4px 4px 6px 6px"></div>
<svg class="abs" style="left:37.5px;top:730px" width="7" height="8" viewBox="0 0 7 8"><path d="M.8 0v7" stroke="#000" stroke-width="1.500"/><path d="M3 0v7l3.800-3.500z" fill="#000"/></svg>
<div class="abs" style="left:27.500px;top:545.500px;width:15px;height:2px;background:repeating-linear-gradient(90deg,#fdfdff 0 2px,transparent 2px 4px)"></div><div class="abs" style="left:26.500px;top:544.500px;width:15px;height:2px;background:repeating-linear-gradient(90deg,#8e8c92 0 2px,transparent 2px 4px)"></div>
<svg class="abs" style="left:26px;top:554px" width="16" height="15" viewBox="0 0 16 15"><path d="M0 1h16M0 4.200h16M0 7.400h16M0 10.600h16" stroke="#a9adc4" stroke-width="1.600"/><path d="M0 13.500h16" stroke="#62657d" stroke-width="2.400"/></svg>
<svg class="abs" style="left:26px;top:575px" width="16" height="16" viewBox="0 0 16 16"><circle cx="8" cy="8" r="7.300" fill="#e3e6f4" stroke="#62657d" stroke-width="1.100"/><circle cx="8" cy="8.500" r="4.300" fill="#f6f7fc" stroke="#62657d" stroke-width=".9"/><path d="M6 15v-3.500h4v3.500" fill="#e3e6f4" stroke="#62657d" stroke-width=".9"/></svg>
<svg class="abs" style="left:26px;top:597px" width="16" height="16" viewBox="0 0 16 16"><path d="M.5 0v16M.5 .5h15" stroke="#62657d"/><path d="M3 5h5M3 11.500h5" stroke="#62657d"/><circle cx="5.500" cy="11.500" r="1" fill="#62657d"/><text x="9.500" y="8" font-size="7" font-weight="bold" font-family="Liberation Sans,sans-serif" fill="#62657d">B</text><text x="9.500" y="15" font-size="7" font-weight="bold" font-family="Liberation Sans,sans-serif" fill="#62657d">C</text></svg>
<svg class="abs" style="left:26px;top:619px" width="16" height="15" viewBox="0 0 16 15"><path d="M.5 15v-5.500h15v5.500" fill="none" stroke="#62657d" stroke-width="1.100"/><path d="M7.500 0v7M4.500 1.500l6 4M10.500 1.500l-6 4" stroke="#62657d" stroke-width="1.100"/></svg>
<svg class="abs" style="left:28px;top:641px" width="10" height="16" viewBox="0 0 10 16"><rect x=".5" y=".5" width="8.500" height="15" fill="#e3e6f4" stroke="#62657d" stroke-dasharray="1.500 .8"/><path d="M2.500 3.500h2M5.500 3.500h2M2.500 6.500h2M4 8.500h3M2.500 11.500h2M5 12.500h2" stroke="#62657d" stroke-width="1.200"/></svg>
<svg class="abs" style="left:25px;top:662px" width="17" height="17" viewBox="0 0 17 17"><circle cx="7" cy="7" r="6.300" fill="#f6f7fc" stroke="#62657d" stroke-width="1.200"/><path d="M7 3v4.500h3" fill="none" stroke="#62657d" stroke-width="1.100"/><path d="M9 10c0-2 1-2 1-3.500a2 2 0 0 1 4 0c0 1.500 1 1.500 1 3.500h1.500v3h-9v-3z" fill="#a9adc4" stroke="#62657d" stroke-width=".9"/><path d="M7.500 15.500h9" stroke="#62657d" stroke-width="1.300"/></svg>
<svg class="abs" style="left:25px;top:684px" width="17" height="17" viewBox="0 0 17 17"><path d="M.5 1.500h5l1 1.500h6.500v9.500h-12.500z" fill="#62657d"/><path d="M9 10c0-2 1-2 1-3.500a2 2 0 0 1 4 0c0 1.500 1 1.500 1 3.500h1.500v3h-9v-3z" fill="#a9adc4" stroke="#62657d" stroke-width=".9"/><path d="M7.500 15.500h9" stroke="#62657d" stroke-width="1.300"/></svg>
<svg class="abs" style="left:27px;top:710px" width="14" height="10" viewBox="0 0 14 10"><rect x="0" y="0" width="13" height="10" fill="#62657d"/><rect x="1" y="1" width="3" height="2" fill="#f2f3fa"/><rect x="1" y="4" width="3" height="2" fill="#f2f3fa"/><rect x="1" y="7" width="3" height="2" fill="#f2f3fa"/><rect x="5" y="1" width="3" height="2" fill="#f2f3fa"/><rect x="5" y="4" width="3" height="2" fill="#f2f3fa"/><rect x="5" y="7" width="3" height="2" fill="#f2f3fa"/><rect x="9" y="1" width="3" height="2" fill="#f2f3fa"/><rect x="9" y="4" width="3" height="2" fill="#f2f3fa"/><rect x="9" y="7" width="3" height="2" fill="#f2f3fa"/></svg>
<div class="abs" style="left:55.700px;top:100px;width:1.500px;height:801px;background:#f6f7fd"></div>
</div>

<!-- MDI -->
<div id="mdi" class="abs"></div>

<!-- BOOK1 -->
<div id="book" class="abs cw" style="left:205px;top:200px;width:396px;height:130px;border:1px solid #5f5f5f;border-bottom:none">
 <svg class="abs" style="left:9px;top:10px" width="16" height="16" viewBox="0 0 16 16">
  <rect x="0" y="0" width="15" height="15" fill="#22e23a"/>
  <rect x="0" y="0" width="15" height="4" fill="#e8132c"/>
  <path d="M0 4.5h15M0 8h15M0 11.5h15" stroke="#fff" stroke-width="1"/>
  <path d="M4 0v15M8 0v15M12 0v15" stroke="#2a2ad0" stroke-width="1"/>
  <path d="M2 2h1M6 2h1M10 2h1" stroke="#fff" stroke-width="1.4"/>
  <rect x=".5" y=".5" width="14" height="14" fill="none" stroke="#2b2b2b"/>
  <path d="M15.5 2v14H2" stroke="#555" fill="none"/>
 </svg>
 <div class="cwt" style="left:29.5px;top:11px">Book1 *</div>
 <div class="wb" style="left:285px;top:9px"><svg class="abs" style="left:0;top:0" width="29" height="16" viewBox="0 0 29 16"><rect x="9.5" y="8" width="11" height="5" rx="1.2" fill="#f6f6f6" stroke="#4f4f4f" stroke-width="1.2"/></svg></div>
 <div class="wb" style="left:320px;top:9px"><svg class="abs" style="left:0;top:0" width="29" height="16" viewBox="0 0 29 16"><rect x="9.6" y="4.2" width="10" height="8.2" rx="1.2" fill="#f6f6f6" stroke="#4f4f4f" stroke-width="1.3"/><rect x="12.3" y="6.8" width="4.6" height="3" fill="#e4e4e4" stroke="#4f4f4f" stroke-width="1.1"/></svg></div>
 <div class="wb" style="left:354px;top:9px"><svg class="abs" style="left:0;top:0" width="29" height="16" viewBox="0 0 29 16"><path d="M10.3 4.8l9 7.4M19.3 4.8l-9 7.4" stroke="#4f4f4f" stroke-width="4" stroke-linecap="round"/><path d="M10.3 4.8l9 7.4M19.3 4.8l-9 7.4" stroke="#f4f4f4" stroke-width="1.7" stroke-linecap="round"/></svg></div>
 <!-- sheet -->
 <div class="abs" style="left:8px;top:31px;width:378px;height:100px;background:#e1e0e5;border-top:1px solid #4a4a4a;border-left:1px solid #4a4a4a;overflow:hidden;font-size:12.4px">
  <div class="abs" style="left:85px;top:0;width:1px;height:100px;background:#000"></div>
  <div class="abs" style="left:0;top:23px;width:220px;height:1px;background:#000"></div>
  <div class="abs" style="left:86px;top:0;width:67px;height:23px;background:#e1e0e5;border-right:1px solid #000;text-align:center;line-height:23px;font-size:11.8px">A(X)</div>
  <div class="abs" style="left:153px;top:0;width:67px;height:23px;background:#b9bcd6;border-right:1px solid #000;text-align:center;line-height:23px;font-size:11.8px">B(Y)</div>
  <div class="abs" style="left:86px;top:24px;width:134px;height:80px;background:#fbf9c8"></div>
  <div class="abs" style="left:86px;top:72px;width:134px;height:30px;background:#fbf7a8"></div>
  <div class="abs" style="left:152px;top:24px;width:1px;height:80px;background:#c4c4c4"></div>
  <div class="abs" style="left:219px;top:24px;width:1px;height:80px;background:#c4c4c4"></div>
  <div class="abs" style="left:0;top:39px;width:85px;height:1px;background:#000"></div>
  <div class="abs" style="left:0;top:55px;width:85px;height:1px;background:#000"></div>
  <div class="abs" style="left:0;top:71px;width:85px;height:1px;background:#000"></div>
  <div class="abs" style="left:86px;top:39px;width:134px;height:1px;background:#c4c4c4"></div>
  <div class="abs" style="left:86px;top:55px;width:134px;height:1px;background:#c4c4c4"></div>
  <div class="abs" style="left:86px;top:71px;width:134px;height:1px;background:#c4c4c4"></div>
  <div class="abs" style="left:0;top:24px;width:80px;text-align:right;line-height:16px">Long Name</div>
  <div class="abs" style="left:0;top:40px;width:80px;text-align:right;line-height:16px">Units</div>
  <div class="abs" style="left:0;top:56px;width:80px;text-align:right;line-height:16px">Comments</div>
  <div class="abs" style="left:0;top:72px;width:80px;text-align:right;line-height:16px">F(x)=</div>
  <!-- scrollbar -->
  <div class="abs" style="left:359px;top:0;width:1px;height:100px;background:#fff"></div>
  <div class="abs" style="left:360px;top:0;width:17px;height:17px;background:#f0f0f0"></div>
  <svg class="abs" style="left:363px;top:5px" width="10" height="7" viewBox="0 0 10 7"><path d="M1 6l4-4 4 4" stroke="#505050" stroke-width="1.8" fill="none"/></svg>
  <div class="abs" style="left:360px;top:17px;width:15px;height:90px;background:#cdcdcd"></div>
  <div class="abs" style="left:375px;top:0;width:2px;height:100px;background:#f0f0f0"></div>
 </div>
</div>
</div>

<!-- GRAPH3 -->
<div id="graph" class="abs cw" style="left:150px;top:310px;width:699px;height:566px;border:2px solid #b3007f;border-radius:7px 7px 0 0">
 <svg class="abs" style="left:8px;top:9px" width="17" height="17" viewBox="0 0 17 17">
  <rect x=".5" y=".5" width="15" height="15" fill="#fff" stroke="#333"/>
  <rect x="2" y="2" width="12" height="5" fill="#18e0e0"/><rect x="2" y="8.5" width="12" height="5" fill="#18e0e0"/>
  <path d="M2 7.7h12" stroke="#e02020" stroke-width="1.2"/><path d="M2 14.2h12" stroke="#e02020" stroke-width="1.2" stroke-dasharray="2 1"/>
  <path d="M3 5.5l3-1.5 3 .5 4-1.5M3 11.5l3-1 3 .5 4-1.5" stroke="#3a3ad0" stroke-width="1" fill="none"/>
  <path d="M16.5 2v14.5H2" stroke="#555" fill="none"/>
 </svg>
 <div class="cwt" style="left:28.5px;top:10px">Graph3 *</div>
 <div class="wb" style="left:588px;top:9px"><svg class="abs" style="left:0;top:0" width="29" height="16" viewBox="0 0 29 16"><rect x="9.5" y="8" width="11" height="5" rx="1.2" fill="#f6f6f6" stroke="#4f4f4f" stroke-width="1.2"/></svg></div>
 <div class="wb" style="left:622px;top:9px"><svg class="abs" style="left:0;top:0" width="29" height="16" viewBox="0 0 29 16"><rect x="9.6" y="4.2" width="10" height="8.2" rx="1.2" fill="#f6f6f6" stroke="#4f4f4f" stroke-width="1.3"/><rect x="12.3" y="6.8" width="4.6" height="3" fill="#e4e4e4" stroke="#4f4f4f" stroke-width="1.1"/></svg></div>
 <div class="wb" style="left:656px;top:9px"><svg class="abs" style="left:0;top:0" width="29" height="16" viewBox="0 0 29 16"><path d="M10.3 4.8l9 7.4M19.3 4.8l-9 7.4" stroke="#4f4f4f" stroke-width="4" stroke-linecap="round"/><path d="M10.3 4.8l9 7.4M19.3 4.8l-9 7.4" stroke="#f4f4f4" stroke-width="1.7" stroke-linecap="round"/></svg></div>
 <div class="abs" style="left:7px;top:30px;width:683px;height:526px;background:#fff;border-top:1.5px solid #6b6b6b;border-left:1.5px solid #6b6b6b;border-right:1px solid #fff;border-bottom:1px solid #fff;box-shadow:inset -1px -2.5px 0 0 #c3c3c3"></div>
 <div class="abs" style="left:8.5px;top:31.5px;width:20px;height:19.5px;background:#c0c0c0;font-weight:bold;font-size:13px;line-height:20px;text-align:center">1</div>
</div>
<svg class="abs" style="left:0;top:0" width="998" height="901" viewBox="0 0 998 901" font-family="Liberation Sans, sans-serif">
 <rect x="207.5" y="385.5" width="578.0" height="427.0" fill="none" stroke="#1546ff" stroke-width="1"/>
 <circle cx="496.7" cy="598.7" r="149.0" fill="#000"/>
 <g stroke="#e8e8e8" stroke-width="1.1"><line x1="496.7" y1="598.7" x2="496.7" y2="449.7"/><line x1="496.7" y1="598.7" x2="540.6" y2="456.3"/><line x1="496.7" y1="598.7" x2="613.2" y2="505.8"/><line x1="496.7" y1="598.7" x2="642.0" y2="631.9"/><line x1="496.7" y1="598.7" x2="518.9" y2="746.0"/><line x1="496.7" y1="598.7" x2="351.4" y2="631.9"/></g>
 <path d="M202.0 385.5L207.5 380.0L213.0 385.5L207.5 391.0Z" fill="#0b7a0b"/><path d="M207.5 390.5V385.5H212.5" stroke="#ff4a1a" fill="none"/><path d="M780.0 385.5L785.5 380.0L791.0 385.5L785.5 391.0Z" fill="#0b7a0b"/><path d="M785.5 390.5V385.5H780.5" stroke="#ff4a1a" fill="none"/><path d="M202.0 812.5L207.5 807.0L213.0 812.5L207.5 818.0Z" fill="#0b7a0b"/><path d="M207.5 807.5V812.5H212.5" stroke="#ff4a1a" fill="none"/><path d="M780.0 812.5L785.5 807.0L791.0 812.5L785.5 818.0Z" fill="#0b7a0b"/><path d="M785.5 807.5V812.5H780.5" stroke="#ff4a1a" fill="none"/><path d="M491.0 385.5L496.5 380.0L502.0 385.5L496.5 391.0Z" fill="#0b7a0b"/><path d="M491.5 385.5H501.5" stroke="#b5651d" fill="none"/><path d="M491.0 812.5L496.5 807.0L502.0 812.5L496.5 818.0Z" fill="#0b7a0b"/><path d="M491.5 812.5H501.5" stroke="#b5651d" fill="none"/><path d="M202.0 598.5L207.5 593.0L213.0 598.5L207.5 604.0Z" fill="#0b7a0b"/><path d="M207.5 593.5V603.5" stroke="#b5651d" fill="none"/><path d="M780.0 598.5L785.5 593.0L791.0 598.5L785.5 604.0Z" fill="#0b7a0b"/><path d="M785.5 593.5V603.5" stroke="#b5651d" fill="none"/>
 <rect x="710" y="391.0" width="34" height="15.5" fill="#000"/><text x="747.5" y="403.2" font-size="16.5">1</text><rect x="710" y="410.6" width="34" height="15.5" fill="#000"/><text x="747.5" y="422.8" font-size="16.5">2</text><rect x="710" y="430.2" width="34" height="15.5" fill="#000"/><text x="747.5" y="442.4" font-size="16.5">3</text><rect x="710" y="449.8" width="34" height="15.5" fill="#000"/><text x="747.5" y="462.0" font-size="16.5">4</text><rect x="710" y="469.4" width="34" height="15.5" fill="#000"/><text x="747.5" y="481.6" font-size="16.5">5</text><rect x="710" y="489.0" width="34" height="15.5" fill="#000"/><text x="747.5" y="501.2" font-size="16.5">6</text>
 <text x="504" y="431.7" font-size="14">4.8%</text><text x="589" y="458.7" font-size="14">9.5%</text><text x="656" y="565.7" font-size="14">14.3%</text><text x="608" y="731.7" font-size="14">19%</text><text x="363" y="746.7" font-size="14">23.8%</text><text x="327" y="491.7" font-size="14">28.6%</text>
</svg>

<!-- RIGHT PANEL -->
<div id="rpanel">
<div class="abs" style="left:936px;top:388px;width:10px;height:513px;background:linear-gradient(90deg,rgba(0,0,0,0),rgba(0,0,0,.07) 50%,rgba(0,0,0,.28))"></div>
<div class="abs" style="left:945px;top:388px;width:53px;height:513px;background:#fff"></div>
<!-- thumb 1 -->
<div class="abs" style="left:962px;top:406px;width:36px;height:136px;background:repeating-linear-gradient(#d4d5dc 0 7px,#9fa0ae 7px 7.8px,#eeeef2 7.8px 8.5px);overflow:hidden;font-size:5.5px;color:#555;line-height:8.5px;text-align:right;padding-right:1px">&nbsp;<br>Name<br>Units<br>Comments<br>F(x)=<br>1<br>2<br>3<br>4<br>5<br>6<br>7<br>8<br>9<br>10<br>11</div>
<svg class="abs" style="left:962px;top:516px" width="27" height="27" viewBox="0 0 27 27"><rect x=".5" y=".5" width="26" height="26" fill="#fff" stroke="#000"/><rect x="1" y="1" width="25" height="7" fill="#c8c8c8"/><rect x="1" y="1" width="8" height="25" fill="#c8c8c8"/><rect x="9" y="8" width="17" height="6" fill="#fff59a"/><path d="M1 8h25M1 14h25M1 20h25M9 1v25M18 1v25" stroke="#000" stroke-width="1"/></svg>
<svg class="abs" style="left:968px;top:413px" width="24" height="24" viewBox="0 0 24 24"><circle cx="12" cy="12" r="11.5" fill="#0e8a16"/><path d="M6 12.5l4.2 4L18 8" stroke="#fff" stroke-width="3" fill="none"/></svg>
<div class="abs" style="left:995px;top:557px;width:3px;height:9px;background:#e8b060;border:1px solid #556"></div>
<!-- thumb 2 -->
<div class="abs" style="left:962px;top:598px;width:36px;height:136px;background:repeating-linear-gradient(#d6d9e6 0 2.5px,#8f93aa 2.5px 3.3px);overflow:hidden">
 <div class="abs" style="left:0;top:0;width:36px;height:7px;background:#a9c4ea"></div>
 <div class="abs" style="left:0;top:7px;width:36px;height:7px;background:#f2f2f2;font-size:5px;line-height:7px;white-space:nowrap;color:#333">Click on the hea</div>
 <div class="abs" style="left:1px;top:14px;width:36px;height:8px;background:#fff;border:1px solid #667;font-size:5px;line-height:6px;white-space:nowrap;font-weight:bold;color:#222">Configure Colum</div>
 <div class="abs" style="left:0;top:22px;width:36px;height:8px;background:#f4f4f4"></div>
 <div class="abs" style="left:33px;top:30px;width:3px;height:17px;background:#f7f3b0"></div>
</div>
<svg class="abs" style="left:962px;top:708px" width="27" height="27" viewBox="0 0 27 27"><rect x=".5" y=".5" width="26" height="26" fill="#fff" stroke="#000"/><rect x="1" y="1" width="25" height="7" fill="#c8c8c8"/><rect x="1" y="1" width="8" height="25" fill="#c8c8c8"/><rect x="9" y="8" width="17" height="6" fill="#fff59a"/><path d="M1 8h25M1 14h25M1 20h25M9 1v25M18 1v25" stroke="#000" stroke-width="1"/><rect x="12" y="12" width="11" height="9" fill="#10e020"/><path d="M14.5 12v-2a3 3 0 0 1 6 0v2" stroke="#10c020" stroke-width="1.8" fill="none"/></svg>
<!-- thumb 3 -->
<div class="abs" style="left:963px;top:793px;width:35px;height:52px;background:#fdfbe0;border:1px solid #99a;overflow:hidden">
 <div class="abs" style="left:0;top:0;width:35px;height:7px;background:#b5cdea"></div>
 <div class="abs" style="left:0;top:7px;width:14px;height:45px;background:#e4e6ee"></div>
 <div class="abs" style="left:0;top:37px;width:35px;height:1px;background:#667"></div>
 <div class="abs" style="left:14px;top:38px;width:21px;height:14px;background:#fbdcc0"></div>
 <div class="abs" style="left:2px;top:1px;width:4px;height:5px;background:#20b040"></div>
</div>
<!-- watermark -->
<div class="abs" style="left:945px;top:845px;width:53px;height:56px;background:rgba(255,255,255,.85);box-shadow:0 0 3px rgba(0,0,0,.25)"></div>
<svg class="abs" style="left:0;top:0" width="998" height="901" viewBox="0 0 998 901">
 <defs><linearGradient id="wg1" x1="1" y1="0" x2="0" y2="1"><stop offset="0" stop-color="#62b4ea"/><stop offset=".5" stop-color="#4a92dc"/><stop offset="1" stop-color="#3a78c8"/></linearGradient>
 <linearGradient id="wg2" x1="1" y1="0" x2="0" y2="1"><stop offset="0" stop-color="#3aa86a"/><stop offset=".55" stop-color="#62b85a"/><stop offset="1" stop-color="#e6e238"/></linearGradient></defs>
 <path d="M880.500 851.400C872 851 864 853 857 856.500C848 861 841 866.500 840 873C839.500 879 845 883.500 852 883C858 882.500 861.500 878 861.200 873.500C861 871.500 859 870.500 856.900 871.100C858 874 856.500 876.500 853 877.500C848.500 878.500 845.500 876 846.200 872.500C847 868 851 864 857 860.500C863.500 856.500 871 853.500 880.500 851.400Z" fill="url(#wg1)" opacity=".8"/>
 <path d="M842.600 890C849 890 855 889 860 887C869 883.500 877 877.500 880 871C881.500 867.500 880 865 876.500 864.500C871.500 864 866.500 865.500 863.700 867.800C867 867.500 870.500 868.500 871.500 871C872.500 874 870.500 877.500 866.500 880.500C860.500 885 851.500 888 842.600 890Z" fill="url(#wg2)" opacity=".85"/>
</svg>
<div class="abs" style="left:881.5px;top:846.5px;font-family:'Liberation Sans','Noto Sans CJK SC',sans-serif;font-weight:bold;font-size:21px;color:#3f80cc;white-space:nowrap;letter-spacing:.2px;opacity:.85">极光下载站</div>
<div class="abs" style="left:883px;top:874.5px;font-size:16.4px;color:#4fae62;-webkit-text-stroke:.35px #4fae62;white-space:nowrap;letter-spacing:.18px;opacity:.9">www.xz7.com</div>
</div>

<!-- POPUP -->
<div id="popup" class="abs" style="left:824px;top:97px;width:181px;height:292px;background:#f0f0f0;border:1px solid #9c9c9c;box-shadow:1px 1px 2px rgba(0,0,0,.25);font-size:13px;overflow:hidden">
<style>#popup i{position:absolute;width:15px;height:14.5px;border:1px solid #a2a2a2;display:block}#popup b{position:absolute;font-weight:normal;white-space:nowrap;letter-spacing:-.1px}</style>
<div class="abs" style="left:-1.3px;top:-1.8px"><i style="left:10.5px;top:10.5px;background:#f0f0f0"></i>
<b style="left:34px;top:9.5px;letter-spacing:.3px">None</b>
<div class="abs" style="left:6.5px;top:31.5px;width:18.5px;height:18.5px;border:1px solid #000080;background:#f3dfb5"></div>
<div class="abs" style="left:24.5px;top:49.5px;width:18.5px;height:18.5px;border:1px solid #000080;background:#f0c890"></div>
<i style="left:8.0px;top:33.5px;background:#000000"></i><i style="left:26.0px;top:33.5px;background:#ff0000"></i><i style="left:44.0px;top:33.5px;background:#00ff00"></i><i style="left:62.0px;top:33.5px;background:#0000ff"></i><i style="left:80.0px;top:33.5px;background:#00ffff"></i><i style="left:98.0px;top:33.5px;background:#ff00ff"></i><i style="left:116.0px;top:33.5px;background:#ffff00"></i><i style="left:134.0px;top:33.5px;background:#808000"></i><i style="left:152.0px;top:33.5px;background:#000080"></i><i style="left:170.0px;top:33.5px;background:#800080"></i><i style="left:8.0px;top:51.5px;background:#f0007e"></i><i style="left:26.0px;top:51.5px;background:#ffffff"></i><i style="left:44.0px;top:51.5px;background:#c0c0c0"></i><i style="left:62.0px;top:51.5px;background:#808080"></i><i style="left:80.0px;top:51.5px;background:#ffff80"></i><i style="left:98.0px;top:51.5px;background:#80ffff"></i><i style="left:116.0px;top:51.5px;background:#ff80ff"></i><i style="left:134.0px;top:51.5px;background:#404040"></i><i style="left:8.0px;top:91.5px;background:#f0007e"></i><i style="left:26.0px;top:91.5px;background:#fa3c3c"></i><i style="left:44.0px;top:91.5px;background:#f08228"></i><i style="left:62.0px;top:91.5px;background:#e6af2d"></i><i style="left:80.0px;top:91.5px;background:#e6dc32"></i><i style="left:98.0px;top:91.5px;background:#a0e632"></i><i style="left:116.0px;top:91.5px;background:#00dc00"></i><i style="left:134.0px;top:91.5px;background:#00d28c"></i><i style="left:152.0px;top:91.5px;background:#00c8c8"></i><i style="left:170.0px;top:91.5px;background:#00a0ff"></i><i style="left:8.0px;top:118.5px;background:#ffb3d9"></i><i style="left:26.0px;top:118.5px;background:#ffc0c0"></i><i style="left:44.0px;top:118.5px;background:#fcd9b8"></i><i style="left:62.0px;top:118.5px;background:#f8e6bb"></i><i style="left:80.0px;top:118.5px;background:#f7f4bc"></i><i style="left:98.0px;top:118.5px;background:#e3f7bd"></i><i style="left:116.0px;top:118.5px;background:#b3ffb3"></i><i style="left:134.0px;top:118.5px;background:#b0ffe0"></i><i style="left:152.0px;top:118.5px;background:#b0ffff"></i><i style="left:170.0px;top:118.5px;background:#b0e0ff"></i><i style="left:8.0px;top:136.5px;background:#ff80c0"></i><i style="left:26.0px;top:136.5px;background:#ff9999"></i><i style="left:44.0px;top:136.5px;background:#f9bc8c"></i><i style="left:62.0px;top:136.5px;background:#f3d894"></i><i style="left:80.0px;top:136.5px;background:#f2ee95"></i><i style="left:98.0px;top:136.5px;background:#cdf296"></i><i style="left:116.0px;top:136.5px;background:#80ff80"></i><i style="left:134.0px;top:136.5px;background:#7affcb"></i><i style="left:152.0px;top:136.5px;background:#7affff"></i><i style="left:170.0px;top:136.5px;background:#70c8ff"></i><i style="left:8.0px;top:154.5px;background:#ff40a0"></i><i style="left:26.0px;top:154.5px;background:#fc6f6f"></i><i style="left:44.0px;top:154.5px;background:#f5a564"></i><i style="left:62.0px;top:154.5px;background:#efc76a"></i><i style="left:80.0px;top:154.5px;background:#f0e86d"></i><i style="left:98.0px;top:154.5px;background:#b6ee6e"></i><i style="left:116.0px;top:154.5px;background:#40ff40"></i><i style="left:134.0px;top:154.5px;background:#40ffb5"></i><i style="left:152.0px;top:154.5px;background:#30ffff"></i><i style="left:170.0px;top:154.5px;background:#40b0ff"></i><i style="left:8.0px;top:172.5px;background:#a0005a"></i><i style="left:26.0px;top:172.5px;background:#c80000"></i><i style="left:44.0px;top:172.5px;background:#b0540c"></i><i style="left:62.0px;top:172.5px;background:#a87c14"></i><i style="left:80.0px;top:172.5px;background:#a8a018"></i><i style="left:98.0px;top:172.5px;background:#68a018"></i><i style="left:116.0px;top:172.5px;background:#009000"></i><i style="left:134.0px;top:172.5px;background:#00885a"></i><i style="left:152.0px;top:172.5px;background:#008282"></i><i style="left:170.0px;top:172.5px;background:#0060b0"></i><i style="left:8.0px;top:190.5px;background:#6a003c"></i><i style="left:26.0px;top:190.5px;background:#860000"></i><i style="left:44.0px;top:190.5px;background:#783808"></i><i style="left:62.0px;top:190.5px;background:#70520e"></i><i style="left:80.0px;top:190.5px;background:#706a10"></i><i style="left:98.0px;top:190.5px;background:#456a10"></i><i style="left:116.0px;top:190.5px;background:#006000"></i><i style="left:134.0px;top:190.5px;background:#005a3c"></i><i style="left:152.0px;top:190.5px;background:#005656"></i><i style="left:170.0px;top:190.5px;background:#004078"></i>
<b style="left:8px;top:70.5px;letter-spacing:.1px">More colors: System Color List</b>
<b style="left:7.5px;top:210px">Custom</b>
<svg class="abs" style="left:53.5px;top:218px" width="12" height="7" viewBox="0 0 12 7"><path d="M0 0h12l-6 6z" fill="#808080"/></svg>
<i style="left:8px;top:230.5px;background:#f0f0f0;border-color:#c0c0c0"></i>
<b style="left:7.5px;top:251px">Recent colors</b>
<i style="left:8px;top:270.5px;background:#000"></i>
</div></div>

<!-- ARROWS -->
<svg id="arrows" class="abs" style="left:0;top:0;pointer-events:none" width="998" height="901" viewBox="0 0 998 901">
 <defs><filter id="ash" x="-20%" y="-20%" width="140%" height="140%"><feDropShadow dx="1.8" dy="1.8" stdDeviation="1.1" flood-color="#000" flood-opacity=".6"/></filter></defs>
 <g fill="#fb0a0a" stroke="#fb0a0a" stroke-width=".6" stroke-linejoin="round" filter="url(#ash)">
  <path d="M792.7 186.4L817.4 110.3L812.1 112.7L826.3 92.2L824.9 117.1L822.1 111.9L794.7 187.2Z"/><path d="M776.0 238.5L825.1 166.7L819.3 167.5L839.3 151.0L830.4 175.3L829.2 169.6L777.8 239.7Z"/><path d="M693.4 278.9L615.9 396.6L621.8 395.8L601.5 413.5L610.2 388.0L611.7 393.9L691.6 277.7Z"/>
 </g>
</svg>

</body></html>
